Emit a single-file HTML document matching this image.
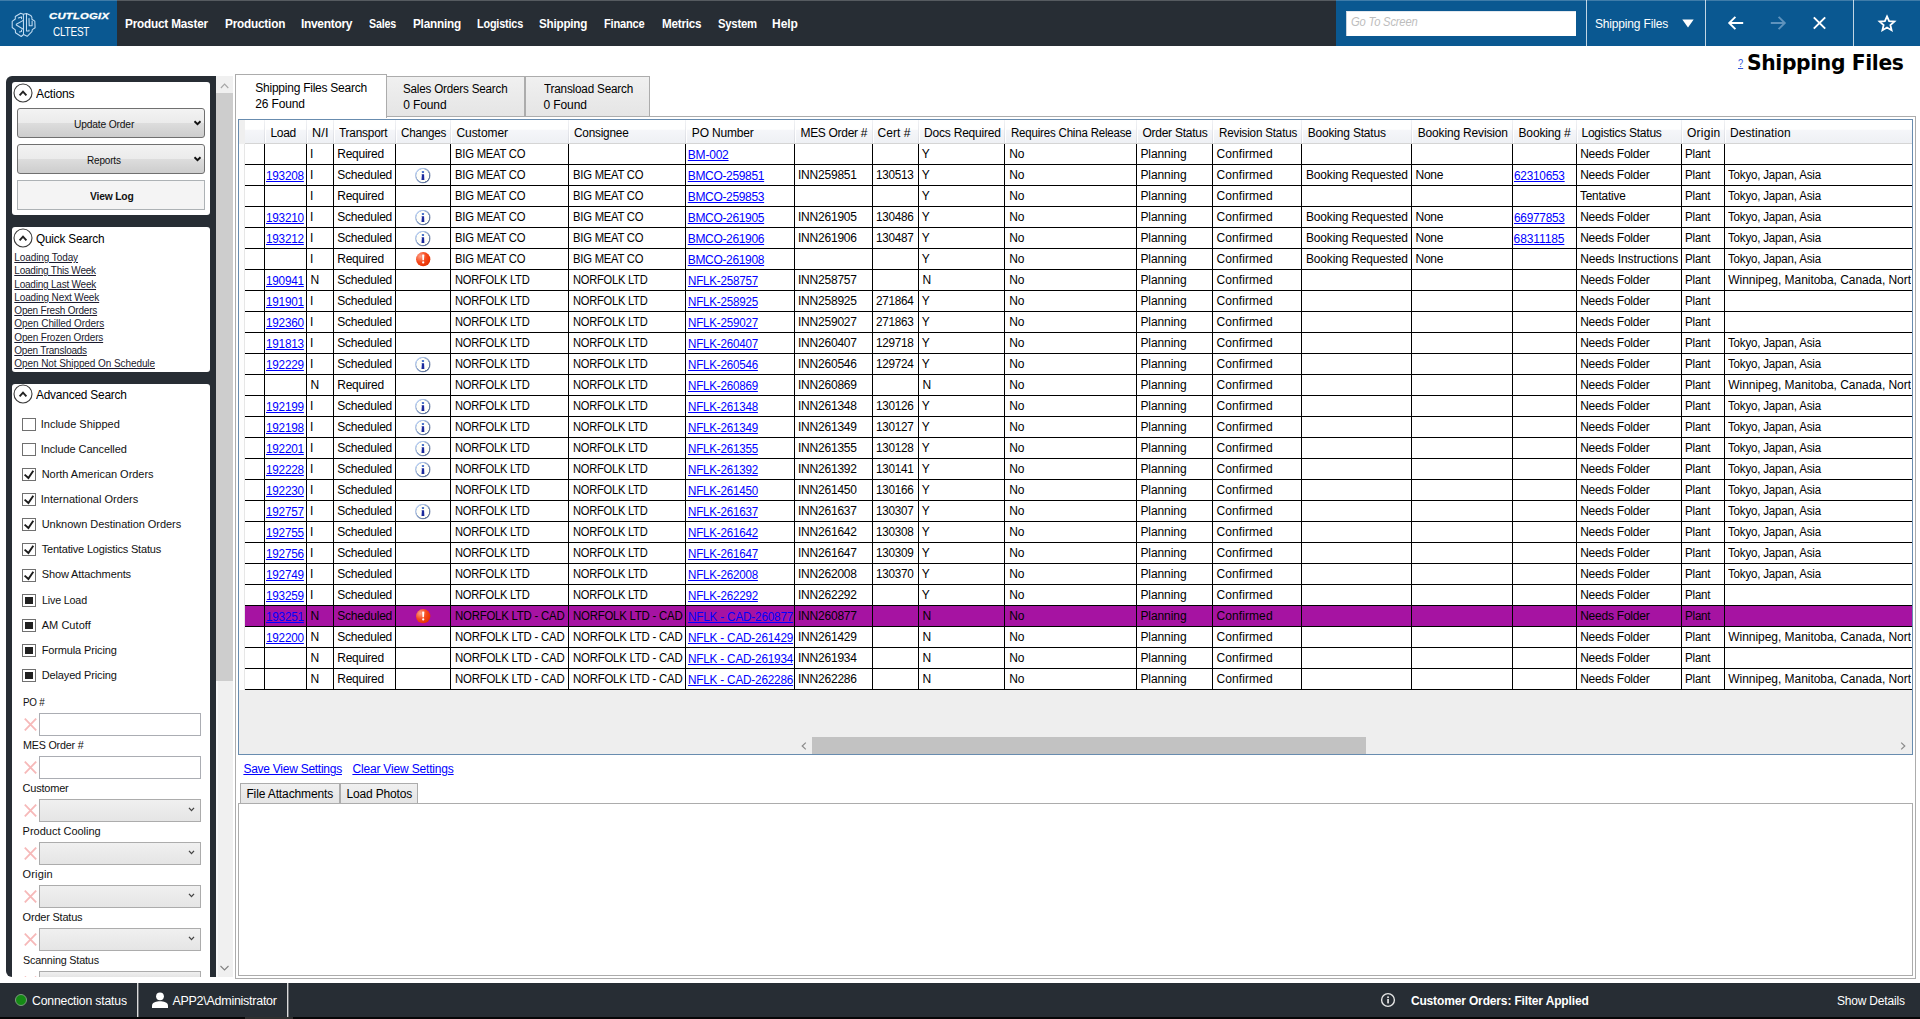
<!DOCTYPE html>
<html lang="en"><head><meta charset="utf-8"><title>Shipping Files</title>
<style>
html,body{margin:0;padding:0;}
body{width:1920px;height:1019px;position:relative;overflow:hidden;background:#fff;font-family:"Liberation Sans",sans-serif;font-size:12px;color:#000;}
div,span,a,svg{position:absolute;box-sizing:border-box;}
.t{white-space:pre;display:block;}
.lnk{color:#0000ff;text-decoration:underline;text-underline-offset:1px;text-decoration-thickness:1px;}
.ql{color:#1a1a2e;text-decoration:underline;text-decoration-thickness:1px;text-underline-offset:1px;}
.vl{width:1px;background:#000;}
.hs{width:1px;}
.row{left:245px;width:1667px;height:21px;border-bottom:1px solid #000;}
.card{background:#fff;border-radius:3px;}
.btn{border:1px solid #707070;border-radius:3px;background:linear-gradient(#f3f3f3 0%,#ebebeb 50%,#dddddd 50%,#cdcdcd 100%);}
.inp{border:1px solid #abadb3;background:#fff;}
.cmb{border:1px solid #acacac;background:linear-gradient(#f0f0f0,#e5e5e5);}
.cb{width:14px;height:13px;border:1px solid #707070;background:#fff;}
.ii{left:0;top:0;width:16px;height:16px;border-radius:50%;transform-origin:8px 8px;background:radial-gradient(circle closest-side,#ffffff 0,#fffef7 79%,rgba(255,254,247,0) 84%),linear-gradient(135deg,#c2d6f6 12%,#8ea3c8 50%,#526790 88%);}
.ai{left:0;top:0;width:16px;height:16px;border-radius:50%;transform-origin:8px 8px;background:radial-gradient(circle at 30% 30%,#fda088 0,#f6491c 42%,#e83405 72%,#a62a06 100%);}
.tab{border:1px solid #acacac;background:linear-gradient(#f0f0f0,#e5e5e5);}
</style></head>
<body>
<div id="topbar"><div style="left:0px;top:0px;width:1920px;height:46px;background:#272d34;"></div><div style="left:0px;top:0px;width:117px;height:46px;background:#0a5891;"></div><div style="left:1336px;top:0px;width:584px;height:46px;background:#0a5891;"></div><div style="left:0px;top:0px;width:1920px;height:1px;background:rgba(255,255,255,0.22);"></div><svg style="left:10px;top:11px;width:28px;height:27px" viewBox="0 0 28 27" fill="none" stroke="#c2dcf2" stroke-width="1.05" stroke-linejoin="round" stroke-linecap="round">
<path d="M10.7 2.3 L13.2 3.2 L16.6 2.5 L20.7 4.4 L21.9 6.2 L21.9 8.3 L24.8 10.1 L25.1 16.8 L22.3 18.6 L21.9 20.7 L17.2 25.3 L13.6 23.5 L11.2 25.5 L5.5 21.8 L5.3 18.9 L2.2 16.5 L2.2 10.4 L5.3 8 L5.3 5.5 Z"/>
<path d="M13.4 3.4 L13.5 23.4"/><path d="M16.5 2.8 L16.5 19.9 L19 19.9 L19 18.9"/>
<path d="M8.3 6.9 L11.5 5.9 L11.5 7.6"/><path d="M13.3 9.4 L6.3 13.3 L6.3 14 L13.3 18.2"/><path d="M11.5 19 L11.5 20.4 L9.4 20.9"/>
<path d="M19 7.4 L19.2 14.7 L22.1 14.7 L22.1 10"/>
</svg><span class="t" style="left:48.80px;top:10.00px;font-size:9px;line-height:12px;letter-spacing:0.204px;font-weight:bold;font-style:italic;color:#fff;transform:scaleX(1.2510);transform-origin:0 50%;-webkit-text-stroke:0.3px #fff;">CUTLOGIX</span><span class="t" style="left:52.50px;top:24.00px;font-size:12px;line-height:16px;letter-spacing:-0.275px;color:#fff;transform:scaleX(0.8331);transform-origin:0 50%;">CLTEST</span><span class="t" style="left:125.40px;top:16.00px;font-size:12px;line-height:16px;letter-spacing:-0.202px;font-weight:bold;color:#fff;transform:scaleX(0.9806);transform-origin:0 50%;">Product Master</span><span class="t" style="left:225.00px;top:16.00px;font-size:12px;line-height:16px;letter-spacing:-0.210px;font-weight:bold;color:#fff;transform:scaleX(0.9819);transform-origin:0 50%;">Production</span><span class="t" style="left:300.90px;top:16.00px;font-size:12px;line-height:16px;letter-spacing:-0.305px;font-weight:bold;color:#fff;">Inventory</span><span class="t" style="left:369.10px;top:16.00px;font-size:12px;line-height:16px;letter-spacing:-0.238px;font-weight:bold;color:#fff;transform:scaleX(0.8915);transform-origin:0 50%;">Sales</span><span class="t" style="left:412.50px;top:16.00px;font-size:12px;line-height:16px;letter-spacing:-0.216px;font-weight:bold;color:#fff;transform:scaleX(0.9790);transform-origin:0 50%;">Planning</span><span class="t" style="left:476.60px;top:16.00px;font-size:12px;line-height:16px;letter-spacing:-0.199px;font-weight:bold;color:#fff;transform:scaleX(0.9045);transform-origin:0 50%;">Logistics</span><span class="t" style="left:539.40px;top:16.00px;font-size:12px;line-height:16px;letter-spacing:-0.219px;font-weight:bold;color:#fff;transform:scaleX(0.9704);transform-origin:0 50%;">Shipping</span><span class="t" style="left:604.10px;top:16.00px;font-size:12px;line-height:16px;letter-spacing:-0.228px;font-weight:bold;color:#fff;transform:scaleX(0.9232);transform-origin:0 50%;">Finance</span><span class="t" style="left:661.50px;top:16.00px;font-size:12px;line-height:16px;letter-spacing:-0.212px;font-weight:bold;color:#fff;transform:scaleX(0.9690);transform-origin:0 50%;">Metrics</span><span class="t" style="left:717.60px;top:16.00px;font-size:12px;line-height:16px;letter-spacing:-0.252px;font-weight:bold;color:#fff;transform:scaleX(0.9421);transform-origin:0 50%;">System</span><span class="t" style="left:772.10px;top:16.00px;font-size:12px;line-height:16px;letter-spacing:-0.125px;font-weight:bold;color:#fff;">Help</span><div style="left:1346px;top:11px;width:230px;height:25px;background:#fff;border-left:1px solid #c9d3dd;border-top:1px solid #e3e8ee;"></div><span class="t" style="left:1351.00px;top:14.00px;font-size:12px;line-height:16px;letter-spacing:-0.202px;font-style:italic;color:#bdbdbd;transform:scaleX(0.9343);transform-origin:0 50%;">Go To Screen</span><div style="left:1586px;top:0px;width:1px;height:46px;background:rgba(255,255,255,0.75);"></div><div style="left:1705px;top:0px;width:1px;height:46px;background:rgba(255,255,255,0.75);"></div><div style="left:1853px;top:0px;width:1px;height:46px;background:rgba(255,255,255,0.75);"></div><span class="t" style="left:1595.10px;top:15.00px;font-size:13px;line-height:17px;letter-spacing:-0.190px;color:#fff;transform:scaleX(0.9236);transform-origin:0 50%;">Shipping Files</span><svg style="left:1682px;top:19px;width:12px;height:9px" viewBox="0 0 12 9"><path d="M0.3 0.5 H11.7 L6 8.6 Z" fill="#fff"/></svg><svg style="left:1727px;top:15px;width:18px;height:16px" viewBox="0 0 18 16" fill="none" stroke="#fff" stroke-width="1.9"><path d="M8.4 1.8 L2.2 8 L8.4 14.2 M2.2 8 H16.2"/></svg><svg style="left:1769px;top:15px;width:18px;height:16px" viewBox="0 0 18 16" fill="none" stroke="#5f93bd" stroke-width="1.9"><path d="M9.6 1.8 L15.8 8 L9.6 14.2 M15.8 8 H1.8"/></svg><svg style="left:1812px;top:16px;width:15px;height:14px" viewBox="0 0 15 14" fill="none" stroke="#fff" stroke-width="2"><path d="M1.8 1.4 L13.2 12.6 M13.2 1.4 L1.8 12.6"/></svg><svg style="left:1877px;top:14px;width:20px;height:18px" viewBox="0 0 20 18" fill="none" stroke="#fff" stroke-width="1.8" stroke-linejoin="miter"><path d="M10 2.4 L12.1 7.2 L17.4 7.6 L13.4 11.1 L14.6 16.2 L10 13.5 L5.4 16.2 L6.6 11.1 L2.6 7.6 L7.9 7.2 Z"/></svg><a class="t lnk" style="left:1737.60px;top:56.00px;font-size:11px;line-height:15px;color:#3355d8;text-decoration-color:#3355d8;transform:scaleX(0.85);transform-origin:0 50%;">?</a><span class="t" style="left:1746.53px;top:49.00px;font-size:21px;line-height:28px;letter-spacing:-0.383px;font-weight:bold;font-family:'DejaVu Sans','Liberation Sans',sans-serif;transform:scaleX(0.9668);transform-origin:0 50%;">Shipping Files</span></div>
<div id="sidebar"><div style="left:6px;top:76px;width:210px;height:901px;background:#272d34;border-radius:6px 0 0 6px;"></div><div style="left:216px;top:76px;width:17px;height:901px;background:#f0f0f0;"></div><div style="left:216px;top:681px;width:2px;height:296px;background:#f8f8f8;"></div><div style="left:216px;top:93px;width:17px;height:588px;background:#cdcdcd;"></div><svg style="left:219px;top:81px;width:11px;height:9px" viewBox="0 0 11 9" fill="none" stroke="#a6a6a6" stroke-width="1.1"><path d="M1.9 7 L5.6 3.1 L9.3 7"/></svg><svg style="left:219px;top:964px;width:11px;height:8px" viewBox="0 0 11 8" fill="none" stroke="#808080" stroke-width="1.1"><path d="M1.5 2 L5.5 6 L9.5 2"/></svg><div class="card" style="left:12px;top:82px;width:198px;height:133px;"></div><svg style="left:12.7px;top:83px;width:20px;height:20px" viewBox="0 0 20 20" fill="none"><circle cx="10" cy="10" r="9" stroke="#3a3a3a" stroke-width="1.1"/><path d="M6.6 12.3 L10 8.6 L13.4 12.3" stroke="#222" stroke-width="1.9"/></svg><span class="t" style="left:36.40px;top:85.00px;font-size:13px;line-height:17px;letter-spacing:-0.216px;transform:scaleX(0.9322);transform-origin:0 50%;">Actions</span><div class="btn" style="left:17px;top:108px;width:188px;height:30px;"></div><span class="t" style="left:73.50px;top:117.00px;font-size:10.5px;line-height:14px;letter-spacing:-0.175px;color:#111;transform:scaleX(0.9776);transform-origin:0 50%;">Update Order</span><svg style="left:193px;top:120px;width:9px;height:6px" viewBox="0 0 9 6" fill="none" stroke="#111" stroke-width="1.9"><path d="M1.5 1.3 L4.5 4.2 L7.5 1.3"/></svg><div class="btn" style="left:17px;top:144px;width:188px;height:30px;"></div><span class="t" style="left:86.90px;top:153.00px;font-size:10.5px;line-height:14px;letter-spacing:-0.183px;color:#111;transform:scaleX(0.9514);transform-origin:0 50%;">Reports</span><svg style="left:193px;top:156px;width:9px;height:6px" viewBox="0 0 9 6" fill="none" stroke="#111" stroke-width="1.9"><path d="M1.5 1.3 L4.5 4.2 L7.5 1.3"/></svg><div style="left:17px;top:180px;width:188px;height:30px;background:#f4f4f4;border:1px solid #adb2b5;"></div><span class="t" style="left:89.80px;top:189.00px;font-size:11px;line-height:15px;letter-spacing:-0.203px;font-weight:bold;color:#111;transform:scaleX(0.9360);transform-origin:0 50%;">View Log</span><div class="card" style="left:12px;top:227px;width:198px;height:145px;"></div><svg style="left:12.5px;top:228px;width:20px;height:20px" viewBox="0 0 20 20" fill="none"><circle cx="10" cy="10" r="9" stroke="#3a3a3a" stroke-width="1.1"/><path d="M6.6 12.3 L10 8.6 L13.4 12.3" stroke="#222" stroke-width="1.9"/></svg><span class="t" style="left:36.30px;top:230.00px;font-size:13px;line-height:17px;letter-spacing:-0.212px;transform:scaleX(0.9063);transform-origin:0 50%;">Quick Search</span><span class="t ql" style="left:14.30px;top:251.00px;font-size:10px;line-height:13px;letter-spacing:-0.088px;color:#1a1a2e;">Loading Today</span><span class="t ql" style="left:14.30px;top:264.00px;font-size:10px;line-height:13px;letter-spacing:-0.214px;color:#1a1a2e;">Loading This Week</span><span class="t ql" style="left:14.30px;top:278.00px;font-size:10px;line-height:13px;letter-spacing:-0.214px;color:#1a1a2e;">Loading Last Week</span><span class="t ql" style="left:14.30px;top:291.00px;font-size:10px;line-height:13px;letter-spacing:-0.131px;color:#1a1a2e;">Loading Next Week</span><span class="t ql" style="left:14.30px;top:304.00px;font-size:10px;line-height:13px;letter-spacing:-0.196px;color:#1a1a2e;">Open Fresh Orders</span><span class="t ql" style="left:14.30px;top:317.00px;font-size:10px;line-height:13px;letter-spacing:-0.064px;color:#1a1a2e;">Open Chilled Orders</span><span class="t ql" style="left:14.30px;top:331.00px;font-size:10px;line-height:13px;letter-spacing:-0.159px;color:#1a1a2e;">Open Frozen Orders</span><span class="t ql" style="left:14.30px;top:344.00px;font-size:10px;line-height:13px;letter-spacing:-0.238px;color:#1a1a2e;">Open Transloads</span><span class="t ql" style="left:14.30px;top:357.00px;font-size:10px;line-height:13px;letter-spacing:-0.078px;color:#1a1a2e;">Open Not Shipped On Schedule</span><div class="card" style="left:12px;top:384px;width:198px;height:593px;border-radius:3px 3px 0 0;"></div><svg style="left:12.5px;top:384.4px;width:20px;height:20px" viewBox="0 0 20 20" fill="none"><circle cx="10" cy="10" r="9" stroke="#3a3a3a" stroke-width="1.1"/><path d="M6.6 12.3 L10 8.6 L13.4 12.3" stroke="#222" stroke-width="1.9"/></svg><span class="t" style="left:36.30px;top:386.00px;font-size:13px;line-height:17px;letter-spacing:-0.219px;transform:scaleX(0.9132);transform-origin:0 50%;">Advanced Search</span><div class="cb" style="left:22px;top:418px"></div><span class="t" style="left:40.70px;top:417.00px;font-size:11px;line-height:15px;letter-spacing:0.016px;color:#111;">Include Shipped</span><div class="cb" style="left:22px;top:443px"></div><span class="t" style="left:40.70px;top:442.00px;font-size:11px;line-height:15px;letter-spacing:-0.083px;color:#111;">Include Cancelled</span><div class="cb" style="left:22px;top:468px"><svg style="left:0;top:0;width:12px;height:11px" viewBox="0 0 12 11" fill="none" stroke="#1c1c1c" stroke-width="1.9"><path d="M1.6 5.6 L5.4 9 L10.3 1.7"/></svg></div><span class="t" style="left:41.70px;top:467.00px;font-size:11px;line-height:15px;letter-spacing:-0.029px;color:#111;">North American Orders</span><div class="cb" style="left:22px;top:493px"><svg style="left:0;top:0;width:12px;height:11px" viewBox="0 0 12 11" fill="none" stroke="#1c1c1c" stroke-width="1.9"><path d="M1.6 5.6 L5.4 9 L10.3 1.7"/></svg></div><span class="t" style="left:40.70px;top:492.00px;font-size:11px;line-height:15px;letter-spacing:0.015px;color:#111;">International Orders</span><div class="cb" style="left:22px;top:518px"><svg style="left:0;top:0;width:12px;height:11px" viewBox="0 0 12 11" fill="none" stroke="#1c1c1c" stroke-width="1.9"><path d="M1.6 5.6 L5.4 9 L10.3 1.7"/></svg></div><span class="t" style="left:41.70px;top:517.00px;font-size:11px;line-height:15px;letter-spacing:-0.045px;color:#111;">Unknown Destination Orders</span><div class="cb" style="left:22px;top:543px"><svg style="left:0;top:0;width:12px;height:11px" viewBox="0 0 12 11" fill="none" stroke="#1c1c1c" stroke-width="1.9"><path d="M1.6 5.6 L5.4 9 L10.3 1.7"/></svg></div><span class="t" style="left:41.70px;top:542.00px;font-size:11px;line-height:15px;letter-spacing:-0.185px;color:#111;">Tentative Logistics Status</span><div class="cb" style="left:22px;top:569px"><svg style="left:0;top:0;width:12px;height:11px" viewBox="0 0 12 11" fill="none" stroke="#1c1c1c" stroke-width="1.9"><path d="M1.6 5.6 L5.4 9 L10.3 1.7"/></svg></div><span class="t" style="left:41.70px;top:567.00px;font-size:11px;line-height:15px;letter-spacing:-0.114px;color:#111;">Show Attachments</span><div class="cb" style="left:22px;top:594px"><div style="left:2px;top:2px;width:8px;height:7px;background:#212121"></div></div><span class="t" style="left:41.70px;top:593.00px;font-size:11px;line-height:15px;letter-spacing:-0.178px;color:#111;transform:scaleX(0.9749);transform-origin:0 50%;">Live Load</span><div class="cb" style="left:22px;top:619px"><div style="left:2px;top:2px;width:8px;height:7px;background:#212121"></div></div><span class="t" style="left:41.70px;top:618.00px;font-size:11px;line-height:15px;letter-spacing:0.044px;color:#111;">AM Cutoff</span><div class="cb" style="left:22px;top:644px"><div style="left:2px;top:2px;width:8px;height:7px;background:#212121"></div></div><span class="t" style="left:41.70px;top:643.00px;font-size:11px;line-height:15px;letter-spacing:-0.136px;color:#111;">Formula Pricing</span><div class="cb" style="left:22px;top:669px"><div style="left:2px;top:2px;width:8px;height:7px;background:#212121"></div></div><span class="t" style="left:41.70px;top:668.00px;font-size:11px;line-height:15px;letter-spacing:-0.137px;color:#111;">Delayed Pricing</span><span class="t" style="left:22.60px;top:695.00px;font-size:11px;line-height:15px;letter-spacing:-0.259px;color:#111;transform:scaleX(0.8939);transform-origin:0 50%;">PO #</span><div class="inp" style="left:39px;top:713px;width:162px;height:23px;"></div><svg style="left:24px;top:718px;width:13px;height:13px" viewBox="0 0 13 13" fill="none" stroke="#f6b9b9" stroke-width="1.8"><path d="M0.8 0.6 L12.2 12.4 M12.2 0.6 L0.8 12.4"/></svg><span class="t" style="left:22.60px;top:738.00px;font-size:11px;line-height:15px;letter-spacing:-0.195px;color:#111;transform:scaleX(0.9744);transform-origin:0 50%;">MES Order #</span><div class="inp" style="left:39px;top:756px;width:162px;height:23px;"></div><svg style="left:24px;top:761px;width:13px;height:13px" viewBox="0 0 13 13" fill="none" stroke="#f6b9b9" stroke-width="1.8"><path d="M0.8 0.6 L12.2 12.4 M12.2 0.6 L0.8 12.4"/></svg><span class="t" style="left:22.60px;top:781.00px;font-size:11px;line-height:15px;letter-spacing:-0.217px;color:#111;">Customer</span><div class="cmb" style="left:39px;top:799px;width:162px;height:23px;"></div><svg style="left:188px;top:807px;width:7px;height:5px" viewBox="0 0 7 5" fill="none" stroke="#444" stroke-width="1.35"><path d="M1 0.9 L3.5 3.6 L6 0.9"/></svg><svg style="left:24px;top:804px;width:13px;height:13px" viewBox="0 0 13 13" fill="none" stroke="#f6b9b9" stroke-width="1.8"><path d="M0.8 0.6 L12.2 12.4 M12.2 0.6 L0.8 12.4"/></svg><span class="t" style="left:22.60px;top:824.00px;font-size:11px;line-height:15px;letter-spacing:-0.011px;color:#111;">Product Cooling</span><div class="cmb" style="left:39px;top:842px;width:162px;height:23px;"></div><svg style="left:188px;top:850px;width:7px;height:5px" viewBox="0 0 7 5" fill="none" stroke="#444" stroke-width="1.35"><path d="M1 0.9 L3.5 3.6 L6 0.9"/></svg><svg style="left:24px;top:847px;width:13px;height:13px" viewBox="0 0 13 13" fill="none" stroke="#f6b9b9" stroke-width="1.8"><path d="M0.8 0.6 L12.2 12.4 M12.2 0.6 L0.8 12.4"/></svg><span class="t" style="left:22.60px;top:867.00px;font-size:11px;line-height:15px;letter-spacing:0.155px;color:#111;">Origin</span><div class="cmb" style="left:39px;top:885px;width:162px;height:23px;"></div><svg style="left:188px;top:893px;width:7px;height:5px" viewBox="0 0 7 5" fill="none" stroke="#444" stroke-width="1.35"><path d="M1 0.9 L3.5 3.6 L6 0.9"/></svg><svg style="left:24px;top:890px;width:13px;height:13px" viewBox="0 0 13 13" fill="none" stroke="#f6b9b9" stroke-width="1.8"><path d="M0.8 0.6 L12.2 12.4 M12.2 0.6 L0.8 12.4"/></svg><span class="t" style="left:22.60px;top:910.00px;font-size:11px;line-height:15px;letter-spacing:-0.214px;color:#111;">Order Status</span><div class="cmb" style="left:39px;top:928px;width:162px;height:23px;"></div><svg style="left:188px;top:936px;width:7px;height:5px" viewBox="0 0 7 5" fill="none" stroke="#444" stroke-width="1.35"><path d="M1 0.9 L3.5 3.6 L6 0.9"/></svg><svg style="left:24px;top:933px;width:13px;height:13px" viewBox="0 0 13 13" fill="none" stroke="#f6b9b9" stroke-width="1.8"><path d="M0.8 0.6 L12.2 12.4 M12.2 0.6 L0.8 12.4"/></svg><span class="t" style="left:22.60px;top:953.00px;font-size:11px;line-height:15px;letter-spacing:-0.173px;color:#111;transform:scaleX(0.9784);transform-origin:0 50%;">Scanning Status</span><div class="cmb" style="left:39px;top:971px;width:162px;height:6px;border-bottom:none;"></div><div style="left:24px;top:976px;width:13px;height:1px;overflow:hidden;"><svg style="left:0px;top:0px;width:13px;height:13px" viewBox="0 0 13 13" fill="none" stroke="#f6b9b9" stroke-width="1.8"><path d="M0.8 0.6 L12.2 12.4 M12.2 0.6 L0.8 12.4"/></svg></div></div>
<div id="main"><div style="left:235px;top:116px;width:1681px;height:863px;border:1px solid #acacac;background:#fff;"></div><div class="tab" style="left:386px;top:76px;width:139px;height:41px;"></div><div class="tab" style="left:525px;top:76px;width:125px;height:41px;"></div><div style="left:235px;top:74px;width:152px;height:44px;border:1px solid #acacac;border-bottom:none;background:#fff;"></div><span class="t" style="left:255.30px;top:80.00px;font-size:12px;line-height:16px;letter-spacing:-0.243px;">Shipping Files Search</span><span class="t" style="left:255.30px;top:96.00px;font-size:12px;line-height:16px;letter-spacing:-0.148px;">26 Found</span><span class="t" style="left:403.30px;top:81.00px;font-size:12px;line-height:16px;letter-spacing:-0.185px;transform:scaleX(0.9685);transform-origin:0 50%;">Sales Orders Search</span><span class="t" style="left:403.30px;top:97.00px;font-size:12px;line-height:16px;letter-spacing:-0.127px;">0 Found</span><span class="t" style="left:543.60px;top:81.00px;font-size:12px;line-height:16px;letter-spacing:-0.187px;transform:scaleX(0.9759);transform-origin:0 50%;">Transload Search</span><span class="t" style="left:543.60px;top:97.00px;font-size:12px;line-height:16px;letter-spacing:-0.127px;">0 Found</span><div style="left:238px;top:119px;width:1675px;height:636px;border:1px solid #688caf;background:#eeeeee;"></div><div style="left:239px;top:120px;width:1673px;height:24px;background:linear-gradient(#ffffff 0%,#ffffff 40%,#f5f6f9 45%,#eef0f4 100%);border-bottom:1px solid #d5d5d5;"></div><div style="left:239px;top:144px;width:6px;height:546px;background:#fdfdfd;border-right:1px solid #e6e6e6;"></div><div style="left:239px;top:120px;width:6px;height:24px;background:#efefef;"></div><div style="left:264px;top:120px;width:1px;height:23px;background:linear-gradient(#f1f2f5,#d9dbe1);"></div><div style="left:265px;top:120px;width:1px;height:23px;background:#ffffff;"></div><div style="left:306px;top:120px;width:1px;height:23px;background:linear-gradient(#f1f2f5,#d9dbe1);"></div><div style="left:307px;top:120px;width:1px;height:23px;background:#ffffff;"></div><div style="left:333px;top:120px;width:1px;height:23px;background:linear-gradient(#f1f2f5,#d9dbe1);"></div><div style="left:334px;top:120px;width:1px;height:23px;background:#ffffff;"></div><div style="left:395px;top:120px;width:1px;height:23px;background:linear-gradient(#f1f2f5,#d9dbe1);"></div><div style="left:396px;top:120px;width:1px;height:23px;background:#ffffff;"></div><div style="left:450px;top:120px;width:1px;height:23px;background:linear-gradient(#f1f2f5,#d9dbe1);"></div><div style="left:451px;top:120px;width:1px;height:23px;background:#ffffff;"></div><div style="left:568px;top:120px;width:1px;height:23px;background:linear-gradient(#f1f2f5,#d9dbe1);"></div><div style="left:569px;top:120px;width:1px;height:23px;background:#ffffff;"></div><div style="left:685px;top:120px;width:1px;height:23px;background:linear-gradient(#f1f2f5,#d9dbe1);"></div><div style="left:686px;top:120px;width:1px;height:23px;background:#ffffff;"></div><div style="left:794px;top:120px;width:1px;height:23px;background:linear-gradient(#f1f2f5,#d9dbe1);"></div><div style="left:795px;top:120px;width:1px;height:23px;background:#ffffff;"></div><div style="left:872px;top:120px;width:1px;height:23px;background:linear-gradient(#f1f2f5,#d9dbe1);"></div><div style="left:873px;top:120px;width:1px;height:23px;background:#ffffff;"></div><div style="left:918px;top:120px;width:1px;height:23px;background:linear-gradient(#f1f2f5,#d9dbe1);"></div><div style="left:919px;top:120px;width:1px;height:23px;background:#ffffff;"></div><div style="left:1004px;top:120px;width:1px;height:23px;background:linear-gradient(#f1f2f5,#d9dbe1);"></div><div style="left:1005px;top:120px;width:1px;height:23px;background:#ffffff;"></div><div style="left:1136px;top:120px;width:1px;height:23px;background:linear-gradient(#f1f2f5,#d9dbe1);"></div><div style="left:1137px;top:120px;width:1px;height:23px;background:#ffffff;"></div><div style="left:1212px;top:120px;width:1px;height:23px;background:linear-gradient(#f1f2f5,#d9dbe1);"></div><div style="left:1213px;top:120px;width:1px;height:23px;background:#ffffff;"></div><div style="left:1301px;top:120px;width:1px;height:23px;background:linear-gradient(#f1f2f5,#d9dbe1);"></div><div style="left:1302px;top:120px;width:1px;height:23px;background:#ffffff;"></div><div style="left:1411px;top:120px;width:1px;height:23px;background:linear-gradient(#f1f2f5,#d9dbe1);"></div><div style="left:1412px;top:120px;width:1px;height:23px;background:#ffffff;"></div><div style="left:1512px;top:120px;width:1px;height:23px;background:linear-gradient(#f1f2f5,#d9dbe1);"></div><div style="left:1513px;top:120px;width:1px;height:23px;background:#ffffff;"></div><div style="left:1576px;top:120px;width:1px;height:23px;background:linear-gradient(#f1f2f5,#d9dbe1);"></div><div style="left:1577px;top:120px;width:1px;height:23px;background:#ffffff;"></div><div style="left:1681px;top:120px;width:1px;height:23px;background:linear-gradient(#f1f2f5,#d9dbe1);"></div><div style="left:1682px;top:120px;width:1px;height:23px;background:#ffffff;"></div><div style="left:1724px;top:120px;width:1px;height:23px;background:linear-gradient(#f1f2f5,#d9dbe1);"></div><div style="left:1725px;top:120px;width:1px;height:23px;background:#ffffff;"></div><span class="t" style="left:270.50px;top:125.00px;font-size:12px;line-height:16px;letter-spacing:-0.340px;">Load</span><span class="t" style="left:312.30px;top:125.00px;font-size:12px;line-height:16px;letter-spacing:0.225px;transform:scaleX(1.0485);transform-origin:0 50%;">N/I</span><span class="t" style="left:339.30px;top:125.00px;font-size:12px;line-height:16px;letter-spacing:-0.193px;transform:scaleX(0.9835);transform-origin:0 50%;">Transport</span><span class="t" style="left:401.00px;top:125.00px;font-size:12px;line-height:16px;letter-spacing:-0.240px;transform:scaleX(0.9722);transform-origin:0 50%;">Changes</span><span class="t" style="left:456.50px;top:125.00px;font-size:12px;line-height:16px;letter-spacing:-0.074px;">Customer</span><span class="t" style="left:574.00px;top:125.00px;font-size:12px;line-height:16px;letter-spacing:-0.216px;transform:scaleX(0.9827);transform-origin:0 50%;">Consignee</span><span class="t" style="left:691.80px;top:125.00px;font-size:12px;line-height:16px;letter-spacing:-0.169px;">PO Number</span><span class="t" style="left:800.50px;top:125.00px;font-size:12px;line-height:16px;letter-spacing:-0.315px;">MES Order #</span><span class="t" style="left:877.60px;top:125.00px;font-size:12px;line-height:16px;letter-spacing:0.019px;">Cert #</span><span class="t" style="left:924.00px;top:125.00px;font-size:12px;line-height:16px;letter-spacing:-0.200px;">Docs Required</span><span class="t" style="left:1010.90px;top:125.00px;font-size:12px;line-height:16px;letter-spacing:-0.186px;transform:scaleX(0.9566);transform-origin:0 50%;">Requires China Release</span><span class="t" style="left:1142.40px;top:125.00px;font-size:12px;line-height:16px;letter-spacing:-0.239px;">Order Status</span><span class="t" style="left:1218.70px;top:125.00px;font-size:12px;line-height:16px;letter-spacing:-0.179px;transform:scaleX(0.9682);transform-origin:0 50%;">Revision Status</span><span class="t" style="left:1307.70px;top:125.00px;font-size:12px;line-height:16px;letter-spacing:-0.186px;">Booking Status</span><span class="t" style="left:1417.70px;top:125.00px;font-size:12px;line-height:16px;letter-spacing:-0.163px;">Booking Revision</span><span class="t" style="left:1518.50px;top:125.00px;font-size:12px;line-height:16px;letter-spacing:-0.150px;">Booking #</span><span class="t" style="left:1581.50px;top:125.00px;font-size:12px;line-height:16px;letter-spacing:-0.249px;">Logistics Status</span><span class="t" style="left:1686.90px;top:125.00px;font-size:12px;line-height:16px;letter-spacing:0.273px;">Origin</span><span class="t" style="left:1730.10px;top:125.00px;font-size:12px;line-height:16px;letter-spacing:0.044px;">Destination</span><div class="row" style="top:144px;background:#fff;"></div><span class="t" style="left:310.00px;top:146.00px;font-size:12px;line-height:16px;">I</span><span class="t" style="left:337.30px;top:146.00px;font-size:12px;line-height:16px;letter-spacing:-0.260px;">Required</span><span class="t" style="left:454.60px;top:146.00px;font-size:12px;line-height:16px;letter-spacing:-0.232px;transform:scaleX(0.9371);transform-origin:0 50%;">BIG MEAT CO</span><a class="t lnk" style="left:687.80px;top:147.00px;font-size:12px;line-height:16px;letter-spacing:-0.209px;">BM-002</a><span class="t" style="left:921.70px;top:146.00px;font-size:12px;line-height:16px;">Y</span><span class="t" style="left:1009.20px;top:146.00px;font-size:12px;line-height:16px;letter-spacing:-0.066px;">No</span><span class="t" style="left:1140.40px;top:146.00px;font-size:12px;line-height:16px;letter-spacing:-0.076px;">Planning</span><span class="t" style="left:1216.40px;top:146.00px;font-size:12px;line-height:16px;letter-spacing:0.103px;">Confirmed</span><span class="t" style="left:1580.20px;top:146.00px;font-size:12px;line-height:16px;letter-spacing:-0.231px;">Needs Folder</span><span class="t" style="left:1685.40px;top:146.00px;font-size:12px;line-height:16px;letter-spacing:-0.210px;transform:scaleX(0.9640);transform-origin:0 50%;">Plant</span><div class="row" style="top:165px;background:#fff;"></div><a class="t lnk" style="left:266.20px;top:168.00px;font-size:12px;line-height:16px;letter-spacing:-0.242px;transform:scaleX(0.9806);transform-origin:0 50%;">193208</a><span class="t" style="left:310.00px;top:167.00px;font-size:12px;line-height:16px;">I</span><span class="t" style="left:337.30px;top:167.00px;font-size:12px;line-height:16px;letter-spacing:-0.217px;">Scheduled</span><div class="ii" style="transform:translate(414.80px,167.60px) scale(0.9750)"><svg style="left:0;top:0;width:16px;height:16px" viewBox="0 0 16 16"><rect x="7.05" y="3.2" width="2.25" height="2.25" rx="0.6" fill="#4a72c8"/><path d="M6.85 6.55 H9.3 L9.6 12.4 H6.65 L7.05 7.5 H6.85 Z" fill="#1c2a9c"/></svg></div><span class="t" style="left:454.60px;top:167.00px;font-size:12px;line-height:16px;letter-spacing:-0.232px;transform:scaleX(0.9371);transform-origin:0 50%;">BIG MEAT CO</span><span class="t" style="left:572.60px;top:167.00px;font-size:12px;line-height:16px;letter-spacing:-0.232px;transform:scaleX(0.9371);transform-origin:0 50%;">BIG MEAT CO</span><a class="t lnk" style="left:687.80px;top:168.00px;font-size:12px;line-height:16px;letter-spacing:-0.337px;">BMCO-259851</a><span class="t" style="left:798.00px;top:167.00px;font-size:12px;line-height:16px;letter-spacing:-0.217px;">INN259851</span><span class="t" style="left:876.30px;top:167.00px;font-size:12px;line-height:16px;letter-spacing:-0.242px;transform:scaleX(0.9755);transform-origin:0 50%;">130513</span><span class="t" style="left:921.70px;top:167.00px;font-size:12px;line-height:16px;">Y</span><span class="t" style="left:1009.20px;top:167.00px;font-size:12px;line-height:16px;letter-spacing:-0.066px;">No</span><span class="t" style="left:1140.40px;top:167.00px;font-size:12px;line-height:16px;letter-spacing:-0.076px;">Planning</span><span class="t" style="left:1216.40px;top:167.00px;font-size:12px;line-height:16px;letter-spacing:0.103px;">Confirmed</span><span class="t" style="left:1306.00px;top:167.00px;font-size:12px;line-height:16px;letter-spacing:-0.173px;">Booking Requested</span><span class="t" style="left:1415.50px;top:167.00px;font-size:12px;line-height:16px;letter-spacing:-0.238px;">None</span><a class="t lnk" style="left:1513.60px;top:168.00px;font-size:12px;line-height:16px;letter-spacing:-0.230px;transform:scaleX(0.9826);transform-origin:0 50%;">62310653</a><span class="t" style="left:1580.20px;top:167.00px;font-size:12px;line-height:16px;letter-spacing:-0.231px;">Needs Folder</span><span class="t" style="left:1685.40px;top:167.00px;font-size:12px;line-height:16px;letter-spacing:-0.210px;transform:scaleX(0.9640);transform-origin:0 50%;">Plant</span><span class="t" style="left:1728.10px;top:167.00px;font-size:12px;line-height:16px;letter-spacing:-0.178px;transform:scaleX(0.9590);transform-origin:0 50%;">Tokyo, Japan, Asia</span><div class="row" style="top:186px;background:#fff;"></div><span class="t" style="left:310.00px;top:188.00px;font-size:12px;line-height:16px;">I</span><span class="t" style="left:337.30px;top:188.00px;font-size:12px;line-height:16px;letter-spacing:-0.260px;">Required</span><span class="t" style="left:454.60px;top:188.00px;font-size:12px;line-height:16px;letter-spacing:-0.232px;transform:scaleX(0.9371);transform-origin:0 50%;">BIG MEAT CO</span><span class="t" style="left:572.60px;top:188.00px;font-size:12px;line-height:16px;letter-spacing:-0.232px;transform:scaleX(0.9371);transform-origin:0 50%;">BIG MEAT CO</span><a class="t lnk" style="left:687.80px;top:189.00px;font-size:12px;line-height:16px;letter-spacing:-0.337px;">BMCO-259853</a><span class="t" style="left:921.70px;top:188.00px;font-size:12px;line-height:16px;">Y</span><span class="t" style="left:1009.20px;top:188.00px;font-size:12px;line-height:16px;letter-spacing:-0.066px;">No</span><span class="t" style="left:1140.40px;top:188.00px;font-size:12px;line-height:16px;letter-spacing:-0.076px;">Planning</span><span class="t" style="left:1216.40px;top:188.00px;font-size:12px;line-height:16px;letter-spacing:0.103px;">Confirmed</span><span class="t" style="left:1580.20px;top:188.00px;font-size:12px;line-height:16px;letter-spacing:-0.181px;transform:scaleX(0.9807);transform-origin:0 50%;">Tentative</span><span class="t" style="left:1685.40px;top:188.00px;font-size:12px;line-height:16px;letter-spacing:-0.210px;transform:scaleX(0.9640);transform-origin:0 50%;">Plant</span><span class="t" style="left:1728.10px;top:188.00px;font-size:12px;line-height:16px;letter-spacing:-0.178px;transform:scaleX(0.9590);transform-origin:0 50%;">Tokyo, Japan, Asia</span><div class="row" style="top:207px;background:#fff;"></div><a class="t lnk" style="left:266.20px;top:210.00px;font-size:12px;line-height:16px;letter-spacing:-0.242px;transform:scaleX(0.9806);transform-origin:0 50%;">193210</a><span class="t" style="left:310.00px;top:209.00px;font-size:12px;line-height:16px;">I</span><span class="t" style="left:337.30px;top:209.00px;font-size:12px;line-height:16px;letter-spacing:-0.217px;">Scheduled</span><div class="ii" style="transform:translate(414.80px,209.60px) scale(0.9750)"><svg style="left:0;top:0;width:16px;height:16px" viewBox="0 0 16 16"><rect x="7.05" y="3.2" width="2.25" height="2.25" rx="0.6" fill="#4a72c8"/><path d="M6.85 6.55 H9.3 L9.6 12.4 H6.65 L7.05 7.5 H6.85 Z" fill="#1c2a9c"/></svg></div><span class="t" style="left:454.60px;top:209.00px;font-size:12px;line-height:16px;letter-spacing:-0.232px;transform:scaleX(0.9371);transform-origin:0 50%;">BIG MEAT CO</span><span class="t" style="left:572.60px;top:209.00px;font-size:12px;line-height:16px;letter-spacing:-0.232px;transform:scaleX(0.9371);transform-origin:0 50%;">BIG MEAT CO</span><a class="t lnk" style="left:687.80px;top:210.00px;font-size:12px;line-height:16px;letter-spacing:-0.337px;">BMCO-261905</a><span class="t" style="left:798.00px;top:209.00px;font-size:12px;line-height:16px;letter-spacing:-0.217px;">INN261905</span><span class="t" style="left:876.30px;top:209.00px;font-size:12px;line-height:16px;letter-spacing:-0.242px;transform:scaleX(0.9755);transform-origin:0 50%;">130486</span><span class="t" style="left:921.70px;top:209.00px;font-size:12px;line-height:16px;">Y</span><span class="t" style="left:1009.20px;top:209.00px;font-size:12px;line-height:16px;letter-spacing:-0.066px;">No</span><span class="t" style="left:1140.40px;top:209.00px;font-size:12px;line-height:16px;letter-spacing:-0.076px;">Planning</span><span class="t" style="left:1216.40px;top:209.00px;font-size:12px;line-height:16px;letter-spacing:0.103px;">Confirmed</span><span class="t" style="left:1306.00px;top:209.00px;font-size:12px;line-height:16px;letter-spacing:-0.173px;">Booking Requested</span><span class="t" style="left:1415.50px;top:209.00px;font-size:12px;line-height:16px;letter-spacing:-0.238px;">None</span><a class="t lnk" style="left:1513.60px;top:210.00px;font-size:12px;line-height:16px;letter-spacing:-0.230px;transform:scaleX(0.9826);transform-origin:0 50%;">66977853</a><span class="t" style="left:1580.20px;top:209.00px;font-size:12px;line-height:16px;letter-spacing:-0.231px;">Needs Folder</span><span class="t" style="left:1685.40px;top:209.00px;font-size:12px;line-height:16px;letter-spacing:-0.210px;transform:scaleX(0.9640);transform-origin:0 50%;">Plant</span><span class="t" style="left:1728.10px;top:209.00px;font-size:12px;line-height:16px;letter-spacing:-0.178px;transform:scaleX(0.9590);transform-origin:0 50%;">Tokyo, Japan, Asia</span><div class="row" style="top:228px;background:#fff;"></div><a class="t lnk" style="left:266.20px;top:231.00px;font-size:12px;line-height:16px;letter-spacing:-0.242px;transform:scaleX(0.9806);transform-origin:0 50%;">193212</a><span class="t" style="left:310.00px;top:230.00px;font-size:12px;line-height:16px;">I</span><span class="t" style="left:337.30px;top:230.00px;font-size:12px;line-height:16px;letter-spacing:-0.217px;">Scheduled</span><div class="ii" style="transform:translate(414.80px,230.60px) scale(0.9750)"><svg style="left:0;top:0;width:16px;height:16px" viewBox="0 0 16 16"><rect x="7.05" y="3.2" width="2.25" height="2.25" rx="0.6" fill="#4a72c8"/><path d="M6.85 6.55 H9.3 L9.6 12.4 H6.65 L7.05 7.5 H6.85 Z" fill="#1c2a9c"/></svg></div><span class="t" style="left:454.60px;top:230.00px;font-size:12px;line-height:16px;letter-spacing:-0.232px;transform:scaleX(0.9371);transform-origin:0 50%;">BIG MEAT CO</span><span class="t" style="left:572.60px;top:230.00px;font-size:12px;line-height:16px;letter-spacing:-0.232px;transform:scaleX(0.9371);transform-origin:0 50%;">BIG MEAT CO</span><a class="t lnk" style="left:687.80px;top:231.00px;font-size:12px;line-height:16px;letter-spacing:-0.337px;">BMCO-261906</a><span class="t" style="left:798.00px;top:230.00px;font-size:12px;line-height:16px;letter-spacing:-0.217px;">INN261906</span><span class="t" style="left:876.30px;top:230.00px;font-size:12px;line-height:16px;letter-spacing:-0.242px;transform:scaleX(0.9755);transform-origin:0 50%;">130487</span><span class="t" style="left:921.70px;top:230.00px;font-size:12px;line-height:16px;">Y</span><span class="t" style="left:1009.20px;top:230.00px;font-size:12px;line-height:16px;letter-spacing:-0.066px;">No</span><span class="t" style="left:1140.40px;top:230.00px;font-size:12px;line-height:16px;letter-spacing:-0.076px;">Planning</span><span class="t" style="left:1216.40px;top:230.00px;font-size:12px;line-height:16px;letter-spacing:0.103px;">Confirmed</span><span class="t" style="left:1306.00px;top:230.00px;font-size:12px;line-height:16px;letter-spacing:-0.173px;">Booking Requested</span><span class="t" style="left:1415.50px;top:230.00px;font-size:12px;line-height:16px;letter-spacing:-0.238px;">None</span><a class="t lnk" style="left:1513.60px;top:231.00px;font-size:12px;line-height:16px;letter-spacing:-0.105px;">68311185</a><span class="t" style="left:1580.20px;top:230.00px;font-size:12px;line-height:16px;letter-spacing:-0.231px;">Needs Folder</span><span class="t" style="left:1685.40px;top:230.00px;font-size:12px;line-height:16px;letter-spacing:-0.210px;transform:scaleX(0.9640);transform-origin:0 50%;">Plant</span><span class="t" style="left:1728.10px;top:230.00px;font-size:12px;line-height:16px;letter-spacing:-0.178px;transform:scaleX(0.9590);transform-origin:0 50%;">Tokyo, Japan, Asia</span><div class="row" style="top:249px;background:#fff;"></div><span class="t" style="left:310.00px;top:251.00px;font-size:12px;line-height:16px;">I</span><span class="t" style="left:337.30px;top:251.00px;font-size:12px;line-height:16px;letter-spacing:-0.260px;">Required</span><div class="ai" style="transform:translate(415.20px,251.20px) scale(0.8938)"><svg style="left:0;top:0;width:16px;height:16px" viewBox="0 0 16 16"><path d="M6.75 3.1 Q8 2.3 9.25 3.1 L8.8 9.2 H7.2 Z" fill="#fff"/><circle cx="8" cy="11.6" r="1.25" fill="#fff"/></svg></div><span class="t" style="left:454.60px;top:251.00px;font-size:12px;line-height:16px;letter-spacing:-0.232px;transform:scaleX(0.9371);transform-origin:0 50%;">BIG MEAT CO</span><span class="t" style="left:572.60px;top:251.00px;font-size:12px;line-height:16px;letter-spacing:-0.232px;transform:scaleX(0.9371);transform-origin:0 50%;">BIG MEAT CO</span><a class="t lnk" style="left:687.80px;top:252.00px;font-size:12px;line-height:16px;letter-spacing:-0.337px;">BMCO-261908</a><span class="t" style="left:921.70px;top:251.00px;font-size:12px;line-height:16px;">Y</span><span class="t" style="left:1009.20px;top:251.00px;font-size:12px;line-height:16px;letter-spacing:-0.066px;">No</span><span class="t" style="left:1140.40px;top:251.00px;font-size:12px;line-height:16px;letter-spacing:-0.076px;">Planning</span><span class="t" style="left:1216.40px;top:251.00px;font-size:12px;line-height:16px;letter-spacing:0.103px;">Confirmed</span><span class="t" style="left:1306.00px;top:251.00px;font-size:12px;line-height:16px;letter-spacing:-0.173px;">Booking Requested</span><span class="t" style="left:1415.50px;top:251.00px;font-size:12px;line-height:16px;letter-spacing:-0.238px;">None</span><span class="t" style="left:1580.20px;top:251.00px;font-size:12px;line-height:16px;letter-spacing:-0.081px;">Needs Instructions</span><span class="t" style="left:1685.40px;top:251.00px;font-size:12px;line-height:16px;letter-spacing:-0.210px;transform:scaleX(0.9640);transform-origin:0 50%;">Plant</span><span class="t" style="left:1728.10px;top:251.00px;font-size:12px;line-height:16px;letter-spacing:-0.178px;transform:scaleX(0.9590);transform-origin:0 50%;">Tokyo, Japan, Asia</span><div class="row" style="top:270px;background:#fff;"></div><a class="t lnk" style="left:266.20px;top:273.00px;font-size:12px;line-height:16px;letter-spacing:-0.242px;transform:scaleX(0.9806);transform-origin:0 50%;">190941</a><span class="t" style="left:310.40px;top:272.00px;font-size:12px;line-height:16px;">N</span><span class="t" style="left:337.30px;top:272.00px;font-size:12px;line-height:16px;letter-spacing:-0.217px;">Scheduled</span><span class="t" style="left:454.60px;top:272.00px;font-size:12px;line-height:16px;letter-spacing:-0.250px;transform:scaleX(0.9265);transform-origin:0 50%;">NORFOLK LTD</span><span class="t" style="left:572.60px;top:272.00px;font-size:12px;line-height:16px;letter-spacing:-0.250px;transform:scaleX(0.9265);transform-origin:0 50%;">NORFOLK LTD</span><a class="t lnk" style="left:687.80px;top:273.00px;font-size:12px;line-height:16px;letter-spacing:-0.225px;transform:scaleX(0.9672);transform-origin:0 50%;">NFLK-258757</a><span class="t" style="left:798.00px;top:272.00px;font-size:12px;line-height:16px;letter-spacing:-0.217px;">INN258757</span><span class="t" style="left:922.60px;top:272.00px;font-size:12px;line-height:16px;">N</span><span class="t" style="left:1009.20px;top:272.00px;font-size:12px;line-height:16px;letter-spacing:-0.066px;">No</span><span class="t" style="left:1140.40px;top:272.00px;font-size:12px;line-height:16px;letter-spacing:-0.076px;">Planning</span><span class="t" style="left:1216.40px;top:272.00px;font-size:12px;line-height:16px;letter-spacing:0.103px;">Confirmed</span><span class="t" style="left:1580.20px;top:272.00px;font-size:12px;line-height:16px;letter-spacing:-0.231px;">Needs Folder</span><span class="t" style="left:1685.40px;top:272.00px;font-size:12px;line-height:16px;letter-spacing:-0.210px;transform:scaleX(0.9640);transform-origin:0 50%;">Plant</span><span class="t" style="left:1728.30px;top:272.00px;font-size:12px;line-height:16px;letter-spacing:-0.044px;width:182.4px;overflow:hidden;">Winnipeg, Manitoba, Canada, North America</span><div class="row" style="top:291px;background:#fff;"></div><a class="t lnk" style="left:266.20px;top:294.00px;font-size:12px;line-height:16px;letter-spacing:-0.242px;transform:scaleX(0.9806);transform-origin:0 50%;">191901</a><span class="t" style="left:310.00px;top:293.00px;font-size:12px;line-height:16px;">I</span><span class="t" style="left:337.30px;top:293.00px;font-size:12px;line-height:16px;letter-spacing:-0.217px;">Scheduled</span><span class="t" style="left:454.60px;top:293.00px;font-size:12px;line-height:16px;letter-spacing:-0.250px;transform:scaleX(0.9265);transform-origin:0 50%;">NORFOLK LTD</span><span class="t" style="left:572.60px;top:293.00px;font-size:12px;line-height:16px;letter-spacing:-0.250px;transform:scaleX(0.9265);transform-origin:0 50%;">NORFOLK LTD</span><a class="t lnk" style="left:687.80px;top:294.00px;font-size:12px;line-height:16px;letter-spacing:-0.225px;transform:scaleX(0.9672);transform-origin:0 50%;">NFLK-258925</a><span class="t" style="left:798.00px;top:293.00px;font-size:12px;line-height:16px;letter-spacing:-0.217px;">INN258925</span><span class="t" style="left:876.30px;top:293.00px;font-size:12px;line-height:16px;letter-spacing:-0.242px;transform:scaleX(0.9755);transform-origin:0 50%;">271864</span><span class="t" style="left:921.70px;top:293.00px;font-size:12px;line-height:16px;">Y</span><span class="t" style="left:1009.20px;top:293.00px;font-size:12px;line-height:16px;letter-spacing:-0.066px;">No</span><span class="t" style="left:1140.40px;top:293.00px;font-size:12px;line-height:16px;letter-spacing:-0.076px;">Planning</span><span class="t" style="left:1216.40px;top:293.00px;font-size:12px;line-height:16px;letter-spacing:0.103px;">Confirmed</span><span class="t" style="left:1580.20px;top:293.00px;font-size:12px;line-height:16px;letter-spacing:-0.231px;">Needs Folder</span><span class="t" style="left:1685.40px;top:293.00px;font-size:12px;line-height:16px;letter-spacing:-0.210px;transform:scaleX(0.9640);transform-origin:0 50%;">Plant</span><div class="row" style="top:312px;background:#fff;"></div><a class="t lnk" style="left:266.20px;top:315.00px;font-size:12px;line-height:16px;letter-spacing:-0.242px;transform:scaleX(0.9806);transform-origin:0 50%;">192360</a><span class="t" style="left:310.00px;top:314.00px;font-size:12px;line-height:16px;">I</span><span class="t" style="left:337.30px;top:314.00px;font-size:12px;line-height:16px;letter-spacing:-0.217px;">Scheduled</span><span class="t" style="left:454.60px;top:314.00px;font-size:12px;line-height:16px;letter-spacing:-0.250px;transform:scaleX(0.9265);transform-origin:0 50%;">NORFOLK LTD</span><span class="t" style="left:572.60px;top:314.00px;font-size:12px;line-height:16px;letter-spacing:-0.250px;transform:scaleX(0.9265);transform-origin:0 50%;">NORFOLK LTD</span><a class="t lnk" style="left:687.80px;top:315.00px;font-size:12px;line-height:16px;letter-spacing:-0.225px;transform:scaleX(0.9672);transform-origin:0 50%;">NFLK-259027</a><span class="t" style="left:798.00px;top:314.00px;font-size:12px;line-height:16px;letter-spacing:-0.217px;">INN259027</span><span class="t" style="left:876.30px;top:314.00px;font-size:12px;line-height:16px;letter-spacing:-0.242px;transform:scaleX(0.9755);transform-origin:0 50%;">271863</span><span class="t" style="left:921.70px;top:314.00px;font-size:12px;line-height:16px;">Y</span><span class="t" style="left:1009.20px;top:314.00px;font-size:12px;line-height:16px;letter-spacing:-0.066px;">No</span><span class="t" style="left:1140.40px;top:314.00px;font-size:12px;line-height:16px;letter-spacing:-0.076px;">Planning</span><span class="t" style="left:1216.40px;top:314.00px;font-size:12px;line-height:16px;letter-spacing:0.103px;">Confirmed</span><span class="t" style="left:1580.20px;top:314.00px;font-size:12px;line-height:16px;letter-spacing:-0.231px;">Needs Folder</span><span class="t" style="left:1685.40px;top:314.00px;font-size:12px;line-height:16px;letter-spacing:-0.210px;transform:scaleX(0.9640);transform-origin:0 50%;">Plant</span><div class="row" style="top:333px;background:#fff;"></div><a class="t lnk" style="left:266.20px;top:336.00px;font-size:12px;line-height:16px;letter-spacing:-0.242px;transform:scaleX(0.9806);transform-origin:0 50%;">191813</a><span class="t" style="left:310.00px;top:335.00px;font-size:12px;line-height:16px;">I</span><span class="t" style="left:337.30px;top:335.00px;font-size:12px;line-height:16px;letter-spacing:-0.217px;">Scheduled</span><span class="t" style="left:454.60px;top:335.00px;font-size:12px;line-height:16px;letter-spacing:-0.250px;transform:scaleX(0.9265);transform-origin:0 50%;">NORFOLK LTD</span><span class="t" style="left:572.60px;top:335.00px;font-size:12px;line-height:16px;letter-spacing:-0.250px;transform:scaleX(0.9265);transform-origin:0 50%;">NORFOLK LTD</span><a class="t lnk" style="left:687.80px;top:336.00px;font-size:12px;line-height:16px;letter-spacing:-0.225px;transform:scaleX(0.9672);transform-origin:0 50%;">NFLK-260407</a><span class="t" style="left:798.00px;top:335.00px;font-size:12px;line-height:16px;letter-spacing:-0.217px;">INN260407</span><span class="t" style="left:876.30px;top:335.00px;font-size:12px;line-height:16px;letter-spacing:-0.242px;transform:scaleX(0.9755);transform-origin:0 50%;">129718</span><span class="t" style="left:921.70px;top:335.00px;font-size:12px;line-height:16px;">Y</span><span class="t" style="left:1009.20px;top:335.00px;font-size:12px;line-height:16px;letter-spacing:-0.066px;">No</span><span class="t" style="left:1140.40px;top:335.00px;font-size:12px;line-height:16px;letter-spacing:-0.076px;">Planning</span><span class="t" style="left:1216.40px;top:335.00px;font-size:12px;line-height:16px;letter-spacing:0.103px;">Confirmed</span><span class="t" style="left:1580.20px;top:335.00px;font-size:12px;line-height:16px;letter-spacing:-0.231px;">Needs Folder</span><span class="t" style="left:1685.40px;top:335.00px;font-size:12px;line-height:16px;letter-spacing:-0.210px;transform:scaleX(0.9640);transform-origin:0 50%;">Plant</span><span class="t" style="left:1728.10px;top:335.00px;font-size:12px;line-height:16px;letter-spacing:-0.178px;transform:scaleX(0.9590);transform-origin:0 50%;">Tokyo, Japan, Asia</span><div class="row" style="top:354px;background:#fff;"></div><a class="t lnk" style="left:266.20px;top:357.00px;font-size:12px;line-height:16px;letter-spacing:-0.242px;transform:scaleX(0.9806);transform-origin:0 50%;">192229</a><span class="t" style="left:310.00px;top:356.00px;font-size:12px;line-height:16px;">I</span><span class="t" style="left:337.30px;top:356.00px;font-size:12px;line-height:16px;letter-spacing:-0.217px;">Scheduled</span><div class="ii" style="transform:translate(414.80px,356.60px) scale(0.9750)"><svg style="left:0;top:0;width:16px;height:16px" viewBox="0 0 16 16"><rect x="7.05" y="3.2" width="2.25" height="2.25" rx="0.6" fill="#4a72c8"/><path d="M6.85 6.55 H9.3 L9.6 12.4 H6.65 L7.05 7.5 H6.85 Z" fill="#1c2a9c"/></svg></div><span class="t" style="left:454.60px;top:356.00px;font-size:12px;line-height:16px;letter-spacing:-0.250px;transform:scaleX(0.9265);transform-origin:0 50%;">NORFOLK LTD</span><span class="t" style="left:572.60px;top:356.00px;font-size:12px;line-height:16px;letter-spacing:-0.250px;transform:scaleX(0.9265);transform-origin:0 50%;">NORFOLK LTD</span><a class="t lnk" style="left:687.80px;top:357.00px;font-size:12px;line-height:16px;letter-spacing:-0.225px;transform:scaleX(0.9672);transform-origin:0 50%;">NFLK-260546</a><span class="t" style="left:798.00px;top:356.00px;font-size:12px;line-height:16px;letter-spacing:-0.217px;">INN260546</span><span class="t" style="left:876.30px;top:356.00px;font-size:12px;line-height:16px;letter-spacing:-0.242px;transform:scaleX(0.9755);transform-origin:0 50%;">129724</span><span class="t" style="left:921.70px;top:356.00px;font-size:12px;line-height:16px;">Y</span><span class="t" style="left:1009.20px;top:356.00px;font-size:12px;line-height:16px;letter-spacing:-0.066px;">No</span><span class="t" style="left:1140.40px;top:356.00px;font-size:12px;line-height:16px;letter-spacing:-0.076px;">Planning</span><span class="t" style="left:1216.40px;top:356.00px;font-size:12px;line-height:16px;letter-spacing:0.103px;">Confirmed</span><span class="t" style="left:1580.20px;top:356.00px;font-size:12px;line-height:16px;letter-spacing:-0.231px;">Needs Folder</span><span class="t" style="left:1685.40px;top:356.00px;font-size:12px;line-height:16px;letter-spacing:-0.210px;transform:scaleX(0.9640);transform-origin:0 50%;">Plant</span><span class="t" style="left:1728.10px;top:356.00px;font-size:12px;line-height:16px;letter-spacing:-0.178px;transform:scaleX(0.9590);transform-origin:0 50%;">Tokyo, Japan, Asia</span><div class="row" style="top:375px;background:#fff;"></div><span class="t" style="left:310.40px;top:377.00px;font-size:12px;line-height:16px;">N</span><span class="t" style="left:337.30px;top:377.00px;font-size:12px;line-height:16px;letter-spacing:-0.260px;">Required</span><span class="t" style="left:454.60px;top:377.00px;font-size:12px;line-height:16px;letter-spacing:-0.250px;transform:scaleX(0.9265);transform-origin:0 50%;">NORFOLK LTD</span><span class="t" style="left:572.60px;top:377.00px;font-size:12px;line-height:16px;letter-spacing:-0.250px;transform:scaleX(0.9265);transform-origin:0 50%;">NORFOLK LTD</span><a class="t lnk" style="left:687.80px;top:378.00px;font-size:12px;line-height:16px;letter-spacing:-0.225px;transform:scaleX(0.9672);transform-origin:0 50%;">NFLK-260869</a><span class="t" style="left:798.00px;top:377.00px;font-size:12px;line-height:16px;letter-spacing:-0.217px;">INN260869</span><span class="t" style="left:922.60px;top:377.00px;font-size:12px;line-height:16px;">N</span><span class="t" style="left:1009.20px;top:377.00px;font-size:12px;line-height:16px;letter-spacing:-0.066px;">No</span><span class="t" style="left:1140.40px;top:377.00px;font-size:12px;line-height:16px;letter-spacing:-0.076px;">Planning</span><span class="t" style="left:1216.40px;top:377.00px;font-size:12px;line-height:16px;letter-spacing:0.103px;">Confirmed</span><span class="t" style="left:1580.20px;top:377.00px;font-size:12px;line-height:16px;letter-spacing:-0.231px;">Needs Folder</span><span class="t" style="left:1685.40px;top:377.00px;font-size:12px;line-height:16px;letter-spacing:-0.210px;transform:scaleX(0.9640);transform-origin:0 50%;">Plant</span><span class="t" style="left:1728.30px;top:377.00px;font-size:12px;line-height:16px;letter-spacing:-0.044px;width:182.4px;overflow:hidden;">Winnipeg, Manitoba, Canada, North America</span><div class="row" style="top:396px;background:#fff;"></div><a class="t lnk" style="left:266.20px;top:399.00px;font-size:12px;line-height:16px;letter-spacing:-0.242px;transform:scaleX(0.9806);transform-origin:0 50%;">192199</a><span class="t" style="left:310.00px;top:398.00px;font-size:12px;line-height:16px;">I</span><span class="t" style="left:337.30px;top:398.00px;font-size:12px;line-height:16px;letter-spacing:-0.217px;">Scheduled</span><div class="ii" style="transform:translate(414.80px,398.60px) scale(0.9750)"><svg style="left:0;top:0;width:16px;height:16px" viewBox="0 0 16 16"><rect x="7.05" y="3.2" width="2.25" height="2.25" rx="0.6" fill="#4a72c8"/><path d="M6.85 6.55 H9.3 L9.6 12.4 H6.65 L7.05 7.5 H6.85 Z" fill="#1c2a9c"/></svg></div><span class="t" style="left:454.60px;top:398.00px;font-size:12px;line-height:16px;letter-spacing:-0.250px;transform:scaleX(0.9265);transform-origin:0 50%;">NORFOLK LTD</span><span class="t" style="left:572.60px;top:398.00px;font-size:12px;line-height:16px;letter-spacing:-0.250px;transform:scaleX(0.9265);transform-origin:0 50%;">NORFOLK LTD</span><a class="t lnk" style="left:687.80px;top:399.00px;font-size:12px;line-height:16px;letter-spacing:-0.225px;transform:scaleX(0.9672);transform-origin:0 50%;">NFLK-261348</a><span class="t" style="left:798.00px;top:398.00px;font-size:12px;line-height:16px;letter-spacing:-0.217px;">INN261348</span><span class="t" style="left:876.30px;top:398.00px;font-size:12px;line-height:16px;letter-spacing:-0.242px;transform:scaleX(0.9755);transform-origin:0 50%;">130126</span><span class="t" style="left:921.70px;top:398.00px;font-size:12px;line-height:16px;">Y</span><span class="t" style="left:1009.20px;top:398.00px;font-size:12px;line-height:16px;letter-spacing:-0.066px;">No</span><span class="t" style="left:1140.40px;top:398.00px;font-size:12px;line-height:16px;letter-spacing:-0.076px;">Planning</span><span class="t" style="left:1216.40px;top:398.00px;font-size:12px;line-height:16px;letter-spacing:0.103px;">Confirmed</span><span class="t" style="left:1580.20px;top:398.00px;font-size:12px;line-height:16px;letter-spacing:-0.231px;">Needs Folder</span><span class="t" style="left:1685.40px;top:398.00px;font-size:12px;line-height:16px;letter-spacing:-0.210px;transform:scaleX(0.9640);transform-origin:0 50%;">Plant</span><span class="t" style="left:1728.10px;top:398.00px;font-size:12px;line-height:16px;letter-spacing:-0.178px;transform:scaleX(0.9590);transform-origin:0 50%;">Tokyo, Japan, Asia</span><div class="row" style="top:417px;background:#fff;"></div><a class="t lnk" style="left:266.20px;top:420.00px;font-size:12px;line-height:16px;letter-spacing:-0.242px;transform:scaleX(0.9806);transform-origin:0 50%;">192198</a><span class="t" style="left:310.00px;top:419.00px;font-size:12px;line-height:16px;">I</span><span class="t" style="left:337.30px;top:419.00px;font-size:12px;line-height:16px;letter-spacing:-0.217px;">Scheduled</span><div class="ii" style="transform:translate(414.80px,419.60px) scale(0.9750)"><svg style="left:0;top:0;width:16px;height:16px" viewBox="0 0 16 16"><rect x="7.05" y="3.2" width="2.25" height="2.25" rx="0.6" fill="#4a72c8"/><path d="M6.85 6.55 H9.3 L9.6 12.4 H6.65 L7.05 7.5 H6.85 Z" fill="#1c2a9c"/></svg></div><span class="t" style="left:454.60px;top:419.00px;font-size:12px;line-height:16px;letter-spacing:-0.250px;transform:scaleX(0.9265);transform-origin:0 50%;">NORFOLK LTD</span><span class="t" style="left:572.60px;top:419.00px;font-size:12px;line-height:16px;letter-spacing:-0.250px;transform:scaleX(0.9265);transform-origin:0 50%;">NORFOLK LTD</span><a class="t lnk" style="left:687.80px;top:420.00px;font-size:12px;line-height:16px;letter-spacing:-0.225px;transform:scaleX(0.9672);transform-origin:0 50%;">NFLK-261349</a><span class="t" style="left:798.00px;top:419.00px;font-size:12px;line-height:16px;letter-spacing:-0.217px;">INN261349</span><span class="t" style="left:876.30px;top:419.00px;font-size:12px;line-height:16px;letter-spacing:-0.242px;transform:scaleX(0.9755);transform-origin:0 50%;">130127</span><span class="t" style="left:921.70px;top:419.00px;font-size:12px;line-height:16px;">Y</span><span class="t" style="left:1009.20px;top:419.00px;font-size:12px;line-height:16px;letter-spacing:-0.066px;">No</span><span class="t" style="left:1140.40px;top:419.00px;font-size:12px;line-height:16px;letter-spacing:-0.076px;">Planning</span><span class="t" style="left:1216.40px;top:419.00px;font-size:12px;line-height:16px;letter-spacing:0.103px;">Confirmed</span><span class="t" style="left:1580.20px;top:419.00px;font-size:12px;line-height:16px;letter-spacing:-0.231px;">Needs Folder</span><span class="t" style="left:1685.40px;top:419.00px;font-size:12px;line-height:16px;letter-spacing:-0.210px;transform:scaleX(0.9640);transform-origin:0 50%;">Plant</span><span class="t" style="left:1728.10px;top:419.00px;font-size:12px;line-height:16px;letter-spacing:-0.178px;transform:scaleX(0.9590);transform-origin:0 50%;">Tokyo, Japan, Asia</span><div class="row" style="top:438px;background:#fff;"></div><a class="t lnk" style="left:266.20px;top:441.00px;font-size:12px;line-height:16px;letter-spacing:-0.242px;transform:scaleX(0.9806);transform-origin:0 50%;">192201</a><span class="t" style="left:310.00px;top:440.00px;font-size:12px;line-height:16px;">I</span><span class="t" style="left:337.30px;top:440.00px;font-size:12px;line-height:16px;letter-spacing:-0.217px;">Scheduled</span><div class="ii" style="transform:translate(414.80px,440.60px) scale(0.9750)"><svg style="left:0;top:0;width:16px;height:16px" viewBox="0 0 16 16"><rect x="7.05" y="3.2" width="2.25" height="2.25" rx="0.6" fill="#4a72c8"/><path d="M6.85 6.55 H9.3 L9.6 12.4 H6.65 L7.05 7.5 H6.85 Z" fill="#1c2a9c"/></svg></div><span class="t" style="left:454.60px;top:440.00px;font-size:12px;line-height:16px;letter-spacing:-0.250px;transform:scaleX(0.9265);transform-origin:0 50%;">NORFOLK LTD</span><span class="t" style="left:572.60px;top:440.00px;font-size:12px;line-height:16px;letter-spacing:-0.250px;transform:scaleX(0.9265);transform-origin:0 50%;">NORFOLK LTD</span><a class="t lnk" style="left:687.80px;top:441.00px;font-size:12px;line-height:16px;letter-spacing:-0.225px;transform:scaleX(0.9672);transform-origin:0 50%;">NFLK-261355</a><span class="t" style="left:798.00px;top:440.00px;font-size:12px;line-height:16px;letter-spacing:-0.217px;">INN261355</span><span class="t" style="left:876.30px;top:440.00px;font-size:12px;line-height:16px;letter-spacing:-0.242px;transform:scaleX(0.9755);transform-origin:0 50%;">130128</span><span class="t" style="left:921.70px;top:440.00px;font-size:12px;line-height:16px;">Y</span><span class="t" style="left:1009.20px;top:440.00px;font-size:12px;line-height:16px;letter-spacing:-0.066px;">No</span><span class="t" style="left:1140.40px;top:440.00px;font-size:12px;line-height:16px;letter-spacing:-0.076px;">Planning</span><span class="t" style="left:1216.40px;top:440.00px;font-size:12px;line-height:16px;letter-spacing:0.103px;">Confirmed</span><span class="t" style="left:1580.20px;top:440.00px;font-size:12px;line-height:16px;letter-spacing:-0.231px;">Needs Folder</span><span class="t" style="left:1685.40px;top:440.00px;font-size:12px;line-height:16px;letter-spacing:-0.210px;transform:scaleX(0.9640);transform-origin:0 50%;">Plant</span><span class="t" style="left:1728.10px;top:440.00px;font-size:12px;line-height:16px;letter-spacing:-0.178px;transform:scaleX(0.9590);transform-origin:0 50%;">Tokyo, Japan, Asia</span><div class="row" style="top:459px;background:#fff;"></div><a class="t lnk" style="left:266.20px;top:462.00px;font-size:12px;line-height:16px;letter-spacing:-0.242px;transform:scaleX(0.9806);transform-origin:0 50%;">192228</a><span class="t" style="left:310.00px;top:461.00px;font-size:12px;line-height:16px;">I</span><span class="t" style="left:337.30px;top:461.00px;font-size:12px;line-height:16px;letter-spacing:-0.217px;">Scheduled</span><div class="ii" style="transform:translate(414.80px,461.60px) scale(0.9750)"><svg style="left:0;top:0;width:16px;height:16px" viewBox="0 0 16 16"><rect x="7.05" y="3.2" width="2.25" height="2.25" rx="0.6" fill="#4a72c8"/><path d="M6.85 6.55 H9.3 L9.6 12.4 H6.65 L7.05 7.5 H6.85 Z" fill="#1c2a9c"/></svg></div><span class="t" style="left:454.60px;top:461.00px;font-size:12px;line-height:16px;letter-spacing:-0.250px;transform:scaleX(0.9265);transform-origin:0 50%;">NORFOLK LTD</span><span class="t" style="left:572.60px;top:461.00px;font-size:12px;line-height:16px;letter-spacing:-0.250px;transform:scaleX(0.9265);transform-origin:0 50%;">NORFOLK LTD</span><a class="t lnk" style="left:687.80px;top:462.00px;font-size:12px;line-height:16px;letter-spacing:-0.225px;transform:scaleX(0.9672);transform-origin:0 50%;">NFLK-261392</a><span class="t" style="left:798.00px;top:461.00px;font-size:12px;line-height:16px;letter-spacing:-0.217px;">INN261392</span><span class="t" style="left:876.30px;top:461.00px;font-size:12px;line-height:16px;letter-spacing:-0.242px;transform:scaleX(0.9755);transform-origin:0 50%;">130141</span><span class="t" style="left:921.70px;top:461.00px;font-size:12px;line-height:16px;">Y</span><span class="t" style="left:1009.20px;top:461.00px;font-size:12px;line-height:16px;letter-spacing:-0.066px;">No</span><span class="t" style="left:1140.40px;top:461.00px;font-size:12px;line-height:16px;letter-spacing:-0.076px;">Planning</span><span class="t" style="left:1216.40px;top:461.00px;font-size:12px;line-height:16px;letter-spacing:0.103px;">Confirmed</span><span class="t" style="left:1580.20px;top:461.00px;font-size:12px;line-height:16px;letter-spacing:-0.231px;">Needs Folder</span><span class="t" style="left:1685.40px;top:461.00px;font-size:12px;line-height:16px;letter-spacing:-0.210px;transform:scaleX(0.9640);transform-origin:0 50%;">Plant</span><span class="t" style="left:1728.10px;top:461.00px;font-size:12px;line-height:16px;letter-spacing:-0.178px;transform:scaleX(0.9590);transform-origin:0 50%;">Tokyo, Japan, Asia</span><div class="row" style="top:480px;background:#fff;"></div><a class="t lnk" style="left:266.20px;top:483.00px;font-size:12px;line-height:16px;letter-spacing:-0.242px;transform:scaleX(0.9806);transform-origin:0 50%;">192230</a><span class="t" style="left:310.00px;top:482.00px;font-size:12px;line-height:16px;">I</span><span class="t" style="left:337.30px;top:482.00px;font-size:12px;line-height:16px;letter-spacing:-0.217px;">Scheduled</span><span class="t" style="left:454.60px;top:482.00px;font-size:12px;line-height:16px;letter-spacing:-0.250px;transform:scaleX(0.9265);transform-origin:0 50%;">NORFOLK LTD</span><span class="t" style="left:572.60px;top:482.00px;font-size:12px;line-height:16px;letter-spacing:-0.250px;transform:scaleX(0.9265);transform-origin:0 50%;">NORFOLK LTD</span><a class="t lnk" style="left:687.80px;top:483.00px;font-size:12px;line-height:16px;letter-spacing:-0.225px;transform:scaleX(0.9672);transform-origin:0 50%;">NFLK-261450</a><span class="t" style="left:798.00px;top:482.00px;font-size:12px;line-height:16px;letter-spacing:-0.217px;">INN261450</span><span class="t" style="left:876.30px;top:482.00px;font-size:12px;line-height:16px;letter-spacing:-0.242px;transform:scaleX(0.9755);transform-origin:0 50%;">130166</span><span class="t" style="left:921.70px;top:482.00px;font-size:12px;line-height:16px;">Y</span><span class="t" style="left:1009.20px;top:482.00px;font-size:12px;line-height:16px;letter-spacing:-0.066px;">No</span><span class="t" style="left:1140.40px;top:482.00px;font-size:12px;line-height:16px;letter-spacing:-0.076px;">Planning</span><span class="t" style="left:1216.40px;top:482.00px;font-size:12px;line-height:16px;letter-spacing:0.103px;">Confirmed</span><span class="t" style="left:1580.20px;top:482.00px;font-size:12px;line-height:16px;letter-spacing:-0.231px;">Needs Folder</span><span class="t" style="left:1685.40px;top:482.00px;font-size:12px;line-height:16px;letter-spacing:-0.210px;transform:scaleX(0.9640);transform-origin:0 50%;">Plant</span><span class="t" style="left:1728.10px;top:482.00px;font-size:12px;line-height:16px;letter-spacing:-0.178px;transform:scaleX(0.9590);transform-origin:0 50%;">Tokyo, Japan, Asia</span><div class="row" style="top:501px;background:#fff;"></div><a class="t lnk" style="left:266.20px;top:504.00px;font-size:12px;line-height:16px;letter-spacing:-0.242px;transform:scaleX(0.9806);transform-origin:0 50%;">192757</a><span class="t" style="left:310.00px;top:503.00px;font-size:12px;line-height:16px;">I</span><span class="t" style="left:337.30px;top:503.00px;font-size:12px;line-height:16px;letter-spacing:-0.217px;">Scheduled</span><div class="ii" style="transform:translate(414.80px,503.60px) scale(0.9750)"><svg style="left:0;top:0;width:16px;height:16px" viewBox="0 0 16 16"><rect x="7.05" y="3.2" width="2.25" height="2.25" rx="0.6" fill="#4a72c8"/><path d="M6.85 6.55 H9.3 L9.6 12.4 H6.65 L7.05 7.5 H6.85 Z" fill="#1c2a9c"/></svg></div><span class="t" style="left:454.60px;top:503.00px;font-size:12px;line-height:16px;letter-spacing:-0.250px;transform:scaleX(0.9265);transform-origin:0 50%;">NORFOLK LTD</span><span class="t" style="left:572.60px;top:503.00px;font-size:12px;line-height:16px;letter-spacing:-0.250px;transform:scaleX(0.9265);transform-origin:0 50%;">NORFOLK LTD</span><a class="t lnk" style="left:687.80px;top:504.00px;font-size:12px;line-height:16px;letter-spacing:-0.225px;transform:scaleX(0.9672);transform-origin:0 50%;">NFLK-261637</a><span class="t" style="left:798.00px;top:503.00px;font-size:12px;line-height:16px;letter-spacing:-0.217px;">INN261637</span><span class="t" style="left:876.30px;top:503.00px;font-size:12px;line-height:16px;letter-spacing:-0.242px;transform:scaleX(0.9755);transform-origin:0 50%;">130307</span><span class="t" style="left:921.70px;top:503.00px;font-size:12px;line-height:16px;">Y</span><span class="t" style="left:1009.20px;top:503.00px;font-size:12px;line-height:16px;letter-spacing:-0.066px;">No</span><span class="t" style="left:1140.40px;top:503.00px;font-size:12px;line-height:16px;letter-spacing:-0.076px;">Planning</span><span class="t" style="left:1216.40px;top:503.00px;font-size:12px;line-height:16px;letter-spacing:0.103px;">Confirmed</span><span class="t" style="left:1580.20px;top:503.00px;font-size:12px;line-height:16px;letter-spacing:-0.231px;">Needs Folder</span><span class="t" style="left:1685.40px;top:503.00px;font-size:12px;line-height:16px;letter-spacing:-0.210px;transform:scaleX(0.9640);transform-origin:0 50%;">Plant</span><span class="t" style="left:1728.10px;top:503.00px;font-size:12px;line-height:16px;letter-spacing:-0.178px;transform:scaleX(0.9590);transform-origin:0 50%;">Tokyo, Japan, Asia</span><div class="row" style="top:522px;background:#fff;"></div><a class="t lnk" style="left:266.20px;top:525.00px;font-size:12px;line-height:16px;letter-spacing:-0.242px;transform:scaleX(0.9806);transform-origin:0 50%;">192755</a><span class="t" style="left:310.00px;top:524.00px;font-size:12px;line-height:16px;">I</span><span class="t" style="left:337.30px;top:524.00px;font-size:12px;line-height:16px;letter-spacing:-0.217px;">Scheduled</span><span class="t" style="left:454.60px;top:524.00px;font-size:12px;line-height:16px;letter-spacing:-0.250px;transform:scaleX(0.9265);transform-origin:0 50%;">NORFOLK LTD</span><span class="t" style="left:572.60px;top:524.00px;font-size:12px;line-height:16px;letter-spacing:-0.250px;transform:scaleX(0.9265);transform-origin:0 50%;">NORFOLK LTD</span><a class="t lnk" style="left:687.80px;top:525.00px;font-size:12px;line-height:16px;letter-spacing:-0.225px;transform:scaleX(0.9672);transform-origin:0 50%;">NFLK-261642</a><span class="t" style="left:798.00px;top:524.00px;font-size:12px;line-height:16px;letter-spacing:-0.217px;">INN261642</span><span class="t" style="left:876.30px;top:524.00px;font-size:12px;line-height:16px;letter-spacing:-0.242px;transform:scaleX(0.9755);transform-origin:0 50%;">130308</span><span class="t" style="left:921.70px;top:524.00px;font-size:12px;line-height:16px;">Y</span><span class="t" style="left:1009.20px;top:524.00px;font-size:12px;line-height:16px;letter-spacing:-0.066px;">No</span><span class="t" style="left:1140.40px;top:524.00px;font-size:12px;line-height:16px;letter-spacing:-0.076px;">Planning</span><span class="t" style="left:1216.40px;top:524.00px;font-size:12px;line-height:16px;letter-spacing:0.103px;">Confirmed</span><span class="t" style="left:1580.20px;top:524.00px;font-size:12px;line-height:16px;letter-spacing:-0.231px;">Needs Folder</span><span class="t" style="left:1685.40px;top:524.00px;font-size:12px;line-height:16px;letter-spacing:-0.210px;transform:scaleX(0.9640);transform-origin:0 50%;">Plant</span><span class="t" style="left:1728.10px;top:524.00px;font-size:12px;line-height:16px;letter-spacing:-0.178px;transform:scaleX(0.9590);transform-origin:0 50%;">Tokyo, Japan, Asia</span><div class="row" style="top:543px;background:#fff;"></div><a class="t lnk" style="left:266.20px;top:546.00px;font-size:12px;line-height:16px;letter-spacing:-0.242px;transform:scaleX(0.9806);transform-origin:0 50%;">192756</a><span class="t" style="left:310.00px;top:545.00px;font-size:12px;line-height:16px;">I</span><span class="t" style="left:337.30px;top:545.00px;font-size:12px;line-height:16px;letter-spacing:-0.217px;">Scheduled</span><span class="t" style="left:454.60px;top:545.00px;font-size:12px;line-height:16px;letter-spacing:-0.250px;transform:scaleX(0.9265);transform-origin:0 50%;">NORFOLK LTD</span><span class="t" style="left:572.60px;top:545.00px;font-size:12px;line-height:16px;letter-spacing:-0.250px;transform:scaleX(0.9265);transform-origin:0 50%;">NORFOLK LTD</span><a class="t lnk" style="left:687.80px;top:546.00px;font-size:12px;line-height:16px;letter-spacing:-0.225px;transform:scaleX(0.9672);transform-origin:0 50%;">NFLK-261647</a><span class="t" style="left:798.00px;top:545.00px;font-size:12px;line-height:16px;letter-spacing:-0.217px;">INN261647</span><span class="t" style="left:876.30px;top:545.00px;font-size:12px;line-height:16px;letter-spacing:-0.242px;transform:scaleX(0.9755);transform-origin:0 50%;">130309</span><span class="t" style="left:921.70px;top:545.00px;font-size:12px;line-height:16px;">Y</span><span class="t" style="left:1009.20px;top:545.00px;font-size:12px;line-height:16px;letter-spacing:-0.066px;">No</span><span class="t" style="left:1140.40px;top:545.00px;font-size:12px;line-height:16px;letter-spacing:-0.076px;">Planning</span><span class="t" style="left:1216.40px;top:545.00px;font-size:12px;line-height:16px;letter-spacing:0.103px;">Confirmed</span><span class="t" style="left:1580.20px;top:545.00px;font-size:12px;line-height:16px;letter-spacing:-0.231px;">Needs Folder</span><span class="t" style="left:1685.40px;top:545.00px;font-size:12px;line-height:16px;letter-spacing:-0.210px;transform:scaleX(0.9640);transform-origin:0 50%;">Plant</span><span class="t" style="left:1728.10px;top:545.00px;font-size:12px;line-height:16px;letter-spacing:-0.178px;transform:scaleX(0.9590);transform-origin:0 50%;">Tokyo, Japan, Asia</span><div class="row" style="top:564px;background:#fff;"></div><a class="t lnk" style="left:266.20px;top:567.00px;font-size:12px;line-height:16px;letter-spacing:-0.242px;transform:scaleX(0.9806);transform-origin:0 50%;">192749</a><span class="t" style="left:310.00px;top:566.00px;font-size:12px;line-height:16px;">I</span><span class="t" style="left:337.30px;top:566.00px;font-size:12px;line-height:16px;letter-spacing:-0.217px;">Scheduled</span><span class="t" style="left:454.60px;top:566.00px;font-size:12px;line-height:16px;letter-spacing:-0.250px;transform:scaleX(0.9265);transform-origin:0 50%;">NORFOLK LTD</span><span class="t" style="left:572.60px;top:566.00px;font-size:12px;line-height:16px;letter-spacing:-0.250px;transform:scaleX(0.9265);transform-origin:0 50%;">NORFOLK LTD</span><a class="t lnk" style="left:687.80px;top:567.00px;font-size:12px;line-height:16px;letter-spacing:-0.225px;transform:scaleX(0.9672);transform-origin:0 50%;">NFLK-262008</a><span class="t" style="left:798.00px;top:566.00px;font-size:12px;line-height:16px;letter-spacing:-0.217px;">INN262008</span><span class="t" style="left:876.30px;top:566.00px;font-size:12px;line-height:16px;letter-spacing:-0.242px;transform:scaleX(0.9755);transform-origin:0 50%;">130370</span><span class="t" style="left:921.70px;top:566.00px;font-size:12px;line-height:16px;">Y</span><span class="t" style="left:1009.20px;top:566.00px;font-size:12px;line-height:16px;letter-spacing:-0.066px;">No</span><span class="t" style="left:1140.40px;top:566.00px;font-size:12px;line-height:16px;letter-spacing:-0.076px;">Planning</span><span class="t" style="left:1216.40px;top:566.00px;font-size:12px;line-height:16px;letter-spacing:0.103px;">Confirmed</span><span class="t" style="left:1580.20px;top:566.00px;font-size:12px;line-height:16px;letter-spacing:-0.231px;">Needs Folder</span><span class="t" style="left:1685.40px;top:566.00px;font-size:12px;line-height:16px;letter-spacing:-0.210px;transform:scaleX(0.9640);transform-origin:0 50%;">Plant</span><span class="t" style="left:1728.10px;top:566.00px;font-size:12px;line-height:16px;letter-spacing:-0.178px;transform:scaleX(0.9590);transform-origin:0 50%;">Tokyo, Japan, Asia</span><div class="row" style="top:585px;background:#fff;"></div><a class="t lnk" style="left:266.20px;top:588.00px;font-size:12px;line-height:16px;letter-spacing:-0.242px;transform:scaleX(0.9806);transform-origin:0 50%;">193259</a><span class="t" style="left:310.00px;top:587.00px;font-size:12px;line-height:16px;">I</span><span class="t" style="left:337.30px;top:587.00px;font-size:12px;line-height:16px;letter-spacing:-0.217px;">Scheduled</span><span class="t" style="left:454.60px;top:587.00px;font-size:12px;line-height:16px;letter-spacing:-0.250px;transform:scaleX(0.9265);transform-origin:0 50%;">NORFOLK LTD</span><span class="t" style="left:572.60px;top:587.00px;font-size:12px;line-height:16px;letter-spacing:-0.250px;transform:scaleX(0.9265);transform-origin:0 50%;">NORFOLK LTD</span><a class="t lnk" style="left:687.80px;top:588.00px;font-size:12px;line-height:16px;letter-spacing:-0.225px;transform:scaleX(0.9672);transform-origin:0 50%;">NFLK-262292</a><span class="t" style="left:798.00px;top:587.00px;font-size:12px;line-height:16px;letter-spacing:-0.217px;">INN262292</span><span class="t" style="left:921.70px;top:587.00px;font-size:12px;line-height:16px;">Y</span><span class="t" style="left:1009.20px;top:587.00px;font-size:12px;line-height:16px;letter-spacing:-0.066px;">No</span><span class="t" style="left:1140.40px;top:587.00px;font-size:12px;line-height:16px;letter-spacing:-0.076px;">Planning</span><span class="t" style="left:1216.40px;top:587.00px;font-size:12px;line-height:16px;letter-spacing:0.103px;">Confirmed</span><span class="t" style="left:1580.20px;top:587.00px;font-size:12px;line-height:16px;letter-spacing:-0.231px;">Needs Folder</span><span class="t" style="left:1685.40px;top:587.00px;font-size:12px;line-height:16px;letter-spacing:-0.210px;transform:scaleX(0.9640);transform-origin:0 50%;">Plant</span><div class="row" style="top:606px;background:#a613a2;"></div><a class="t lnk" style="left:266.20px;top:609.00px;font-size:12px;line-height:16px;letter-spacing:-0.242px;transform:scaleX(0.9806);transform-origin:0 50%;">193251</a><span class="t" style="left:310.40px;top:608.00px;font-size:12px;line-height:16px;">N</span><span class="t" style="left:337.30px;top:608.00px;font-size:12px;line-height:16px;letter-spacing:-0.217px;">Scheduled</span><div class="ai" style="transform:translate(415.20px,608.20px) scale(0.8938)"><svg style="left:0;top:0;width:16px;height:16px" viewBox="0 0 16 16"><path d="M6.75 3.1 Q8 2.3 9.25 3.1 L8.8 9.2 H7.2 Z" fill="#fff"/><circle cx="8" cy="11.6" r="1.25" fill="#fff"/></svg></div><span class="t" style="left:454.60px;top:608.00px;font-size:12px;line-height:16px;letter-spacing:-0.224px;transform:scaleX(0.9493);transform-origin:0 50%;">NORFOLK LTD - CAD</span><span class="t" style="left:572.60px;top:608.00px;font-size:12px;line-height:16px;letter-spacing:-0.224px;transform:scaleX(0.9493);transform-origin:0 50%;">NORFOLK LTD - CAD</span><a class="t lnk" style="left:687.80px;top:609.00px;font-size:12px;line-height:16px;letter-spacing:-0.208px;transform:scaleX(0.9804);transform-origin:0 50%;">NFLK - CAD-260877</a><span class="t" style="left:798.00px;top:608.00px;font-size:12px;line-height:16px;letter-spacing:-0.217px;">INN260877</span><span class="t" style="left:922.60px;top:608.00px;font-size:12px;line-height:16px;">N</span><span class="t" style="left:1009.20px;top:608.00px;font-size:12px;line-height:16px;letter-spacing:-0.066px;">No</span><span class="t" style="left:1140.40px;top:608.00px;font-size:12px;line-height:16px;letter-spacing:-0.076px;">Planning</span><span class="t" style="left:1216.40px;top:608.00px;font-size:12px;line-height:16px;letter-spacing:0.103px;">Confirmed</span><span class="t" style="left:1580.20px;top:608.00px;font-size:12px;line-height:16px;letter-spacing:-0.231px;">Needs Folder</span><span class="t" style="left:1685.40px;top:608.00px;font-size:12px;line-height:16px;letter-spacing:-0.210px;transform:scaleX(0.9640);transform-origin:0 50%;">Plant</span><div class="row" style="top:627px;background:#fff;"></div><a class="t lnk" style="left:266.20px;top:630.00px;font-size:12px;line-height:16px;letter-spacing:-0.242px;transform:scaleX(0.9806);transform-origin:0 50%;">192200</a><span class="t" style="left:310.40px;top:629.00px;font-size:12px;line-height:16px;">N</span><span class="t" style="left:337.30px;top:629.00px;font-size:12px;line-height:16px;letter-spacing:-0.217px;">Scheduled</span><span class="t" style="left:454.60px;top:629.00px;font-size:12px;line-height:16px;letter-spacing:-0.224px;transform:scaleX(0.9493);transform-origin:0 50%;">NORFOLK LTD - CAD</span><span class="t" style="left:572.60px;top:629.00px;font-size:12px;line-height:16px;letter-spacing:-0.224px;transform:scaleX(0.9493);transform-origin:0 50%;">NORFOLK LTD - CAD</span><a class="t lnk" style="left:687.80px;top:630.00px;font-size:12px;line-height:16px;letter-spacing:-0.208px;transform:scaleX(0.9804);transform-origin:0 50%;">NFLK - CAD-261429</a><span class="t" style="left:798.00px;top:629.00px;font-size:12px;line-height:16px;letter-spacing:-0.217px;">INN261429</span><span class="t" style="left:922.60px;top:629.00px;font-size:12px;line-height:16px;">N</span><span class="t" style="left:1009.20px;top:629.00px;font-size:12px;line-height:16px;letter-spacing:-0.066px;">No</span><span class="t" style="left:1140.40px;top:629.00px;font-size:12px;line-height:16px;letter-spacing:-0.076px;">Planning</span><span class="t" style="left:1216.40px;top:629.00px;font-size:12px;line-height:16px;letter-spacing:0.103px;">Confirmed</span><span class="t" style="left:1580.20px;top:629.00px;font-size:12px;line-height:16px;letter-spacing:-0.231px;">Needs Folder</span><span class="t" style="left:1685.40px;top:629.00px;font-size:12px;line-height:16px;letter-spacing:-0.210px;transform:scaleX(0.9640);transform-origin:0 50%;">Plant</span><span class="t" style="left:1728.30px;top:629.00px;font-size:12px;line-height:16px;letter-spacing:-0.044px;width:182.4px;overflow:hidden;">Winnipeg, Manitoba, Canada, North America</span><div class="row" style="top:648px;background:#fff;"></div><span class="t" style="left:310.40px;top:650.00px;font-size:12px;line-height:16px;">N</span><span class="t" style="left:337.30px;top:650.00px;font-size:12px;line-height:16px;letter-spacing:-0.260px;">Required</span><span class="t" style="left:454.60px;top:650.00px;font-size:12px;line-height:16px;letter-spacing:-0.224px;transform:scaleX(0.9493);transform-origin:0 50%;">NORFOLK LTD - CAD</span><span class="t" style="left:572.60px;top:650.00px;font-size:12px;line-height:16px;letter-spacing:-0.224px;transform:scaleX(0.9493);transform-origin:0 50%;">NORFOLK LTD - CAD</span><a class="t lnk" style="left:687.80px;top:651.00px;font-size:12px;line-height:16px;letter-spacing:-0.208px;transform:scaleX(0.9804);transform-origin:0 50%;">NFLK - CAD-261934</a><span class="t" style="left:798.00px;top:650.00px;font-size:12px;line-height:16px;letter-spacing:-0.217px;">INN261934</span><span class="t" style="left:922.60px;top:650.00px;font-size:12px;line-height:16px;">N</span><span class="t" style="left:1009.20px;top:650.00px;font-size:12px;line-height:16px;letter-spacing:-0.066px;">No</span><span class="t" style="left:1140.40px;top:650.00px;font-size:12px;line-height:16px;letter-spacing:-0.076px;">Planning</span><span class="t" style="left:1216.40px;top:650.00px;font-size:12px;line-height:16px;letter-spacing:0.103px;">Confirmed</span><span class="t" style="left:1580.20px;top:650.00px;font-size:12px;line-height:16px;letter-spacing:-0.231px;">Needs Folder</span><span class="t" style="left:1685.40px;top:650.00px;font-size:12px;line-height:16px;letter-spacing:-0.210px;transform:scaleX(0.9640);transform-origin:0 50%;">Plant</span><div class="row" style="top:669px;background:#fff;"></div><span class="t" style="left:310.40px;top:671.00px;font-size:12px;line-height:16px;">N</span><span class="t" style="left:337.30px;top:671.00px;font-size:12px;line-height:16px;letter-spacing:-0.260px;">Required</span><span class="t" style="left:454.60px;top:671.00px;font-size:12px;line-height:16px;letter-spacing:-0.224px;transform:scaleX(0.9493);transform-origin:0 50%;">NORFOLK LTD - CAD</span><span class="t" style="left:572.60px;top:671.00px;font-size:12px;line-height:16px;letter-spacing:-0.224px;transform:scaleX(0.9493);transform-origin:0 50%;">NORFOLK LTD - CAD</span><a class="t lnk" style="left:687.80px;top:672.00px;font-size:12px;line-height:16px;letter-spacing:-0.208px;transform:scaleX(0.9804);transform-origin:0 50%;">NFLK - CAD-262286</a><span class="t" style="left:798.00px;top:671.00px;font-size:12px;line-height:16px;letter-spacing:-0.217px;">INN262286</span><span class="t" style="left:922.60px;top:671.00px;font-size:12px;line-height:16px;">N</span><span class="t" style="left:1009.20px;top:671.00px;font-size:12px;line-height:16px;letter-spacing:-0.066px;">No</span><span class="t" style="left:1140.40px;top:671.00px;font-size:12px;line-height:16px;letter-spacing:-0.076px;">Planning</span><span class="t" style="left:1216.40px;top:671.00px;font-size:12px;line-height:16px;letter-spacing:0.103px;">Confirmed</span><span class="t" style="left:1580.20px;top:671.00px;font-size:12px;line-height:16px;letter-spacing:-0.231px;">Needs Folder</span><span class="t" style="left:1685.40px;top:671.00px;font-size:12px;line-height:16px;letter-spacing:-0.210px;transform:scaleX(0.9640);transform-origin:0 50%;">Plant</span><span class="t" style="left:1728.30px;top:671.00px;font-size:12px;line-height:16px;letter-spacing:-0.044px;width:182.4px;overflow:hidden;">Winnipeg, Manitoba, Canada, North America</span><div class="vl" style="left:264px;top:144px;height:546px"></div><div class="vl" style="left:306px;top:144px;height:546px"></div><div class="vl" style="left:333px;top:144px;height:546px"></div><div class="vl" style="left:395px;top:144px;height:546px"></div><div class="vl" style="left:450px;top:144px;height:546px"></div><div class="vl" style="left:568px;top:144px;height:546px"></div><div class="vl" style="left:685px;top:144px;height:546px"></div><div class="vl" style="left:794px;top:144px;height:546px"></div><div class="vl" style="left:872px;top:144px;height:546px"></div><div class="vl" style="left:918px;top:144px;height:546px"></div><div class="vl" style="left:1004px;top:144px;height:546px"></div><div class="vl" style="left:1136px;top:144px;height:546px"></div><div class="vl" style="left:1212px;top:144px;height:546px"></div><div class="vl" style="left:1301px;top:144px;height:546px"></div><div class="vl" style="left:1411px;top:144px;height:546px"></div><div class="vl" style="left:1512px;top:144px;height:546px"></div><div class="vl" style="left:1576px;top:144px;height:546px"></div><div class="vl" style="left:1681px;top:144px;height:546px"></div><div class="vl" style="left:1724px;top:144px;height:546px"></div><div style="left:812px;top:737px;width:554px;height:17px;background:#c2c2c2;"></div><svg style="left:800px;top:741px;width:8px;height:10px" viewBox="0 0 8 10" fill="none" stroke="#8a8a8a" stroke-width="1.2"><path d="M5.8 1.6 L2.2 5 L5.8 8.4"/></svg><svg style="left:1899px;top:741px;width:8px;height:10px" viewBox="0 0 8 10" fill="none" stroke="#8a8a8a" stroke-width="1.2"><path d="M2.2 1.6 L5.8 5 L2.2 8.4"/></svg><a class="t lnk" style="left:243.40px;top:761.00px;font-size:12px;line-height:16px;letter-spacing:-0.257px;">Save View Settings</a><a class="t lnk" style="left:352.40px;top:761.00px;font-size:12px;line-height:16px;letter-spacing:-0.172px;">Clear View Settings</a><div style="left:238px;top:803px;width:1675px;height:173px;border:1px solid #acacac;background:#fff;"></div><div class="tab" style="left:240px;top:783px;width:100px;height:21px;"></div><div class="tab" style="left:340px;top:783px;width:78px;height:21px;"></div><span class="t" style="left:246.40px;top:786.00px;font-size:12px;line-height:16px;letter-spacing:-0.124px;">File Attachments</span><span class="t" style="left:346.60px;top:786.00px;font-size:12px;line-height:16px;letter-spacing:-0.179px;">Load Photos</span></div>
<div id="statusbar"><div style="left:0px;top:983px;width:1920px;height:34px;background:#272d34;"></div><div style="left:0px;top:1017px;width:1920px;height:2px;background:#060607;"></div><div style="left:245px;top:1017px;width:48px;height:2px;background:#2e2e2e;"></div><div style="left:137px;top:983px;width:2px;height:34px;background:linear-gradient(90deg,#dadada 50%,rgba(218,218,218,0.4) 50%);"></div><div style="left:287px;top:983px;width:2px;height:34px;background:linear-gradient(90deg,#dadada 50%,rgba(218,218,218,0.4) 50%);"></div><div style="left:15px;top:994px;width:12px;height:12px;border-radius:50%;background:#158a15;border:1px solid #7d9a80;"></div><span class="t" style="left:32.40px;top:993.00px;font-size:12.5px;line-height:17px;letter-spacing:-0.187px;color:#fff;transform:scaleX(0.9792);transform-origin:0 50%;">Connection status</span><svg style="left:151px;top:992px;width:18px;height:16px" viewBox="0 0 18 16" fill="#fff"><circle cx="9" cy="4.3" r="3.9"/><path d="M1 16 V13.6 C1 10.4 5.6 9.3 9 9.3 S17 10.4 17 13.6 V16 Z"/></svg><span class="t" style="left:172.40px;top:993.00px;font-size:12.5px;line-height:17px;letter-spacing:-0.265px;color:#fff;">APP2\Administrator</span><svg style="left:1380px;top:992px;width:16px;height:16px" viewBox="0 0 16 16" fill="none"><circle cx="8" cy="8" r="6.4" stroke="#e6e6e6" stroke-width="1.4"/><rect x="7.2" y="7" width="1.7" height="4.4" fill="#e6e6e6"/><rect x="7.2" y="4.4" width="1.7" height="1.7" fill="#e6e6e6"/></svg><span class="t" style="left:1410.90px;top:993.00px;font-size:12px;line-height:16px;letter-spacing:-0.146px;font-weight:bold;color:#fff;">Customer Orders: Filter Applied</span><span class="t" style="left:1836.90px;top:993.00px;font-size:12px;line-height:16px;letter-spacing:-0.185px;color:#fff;">Show Details</span></div>
</body></html>
